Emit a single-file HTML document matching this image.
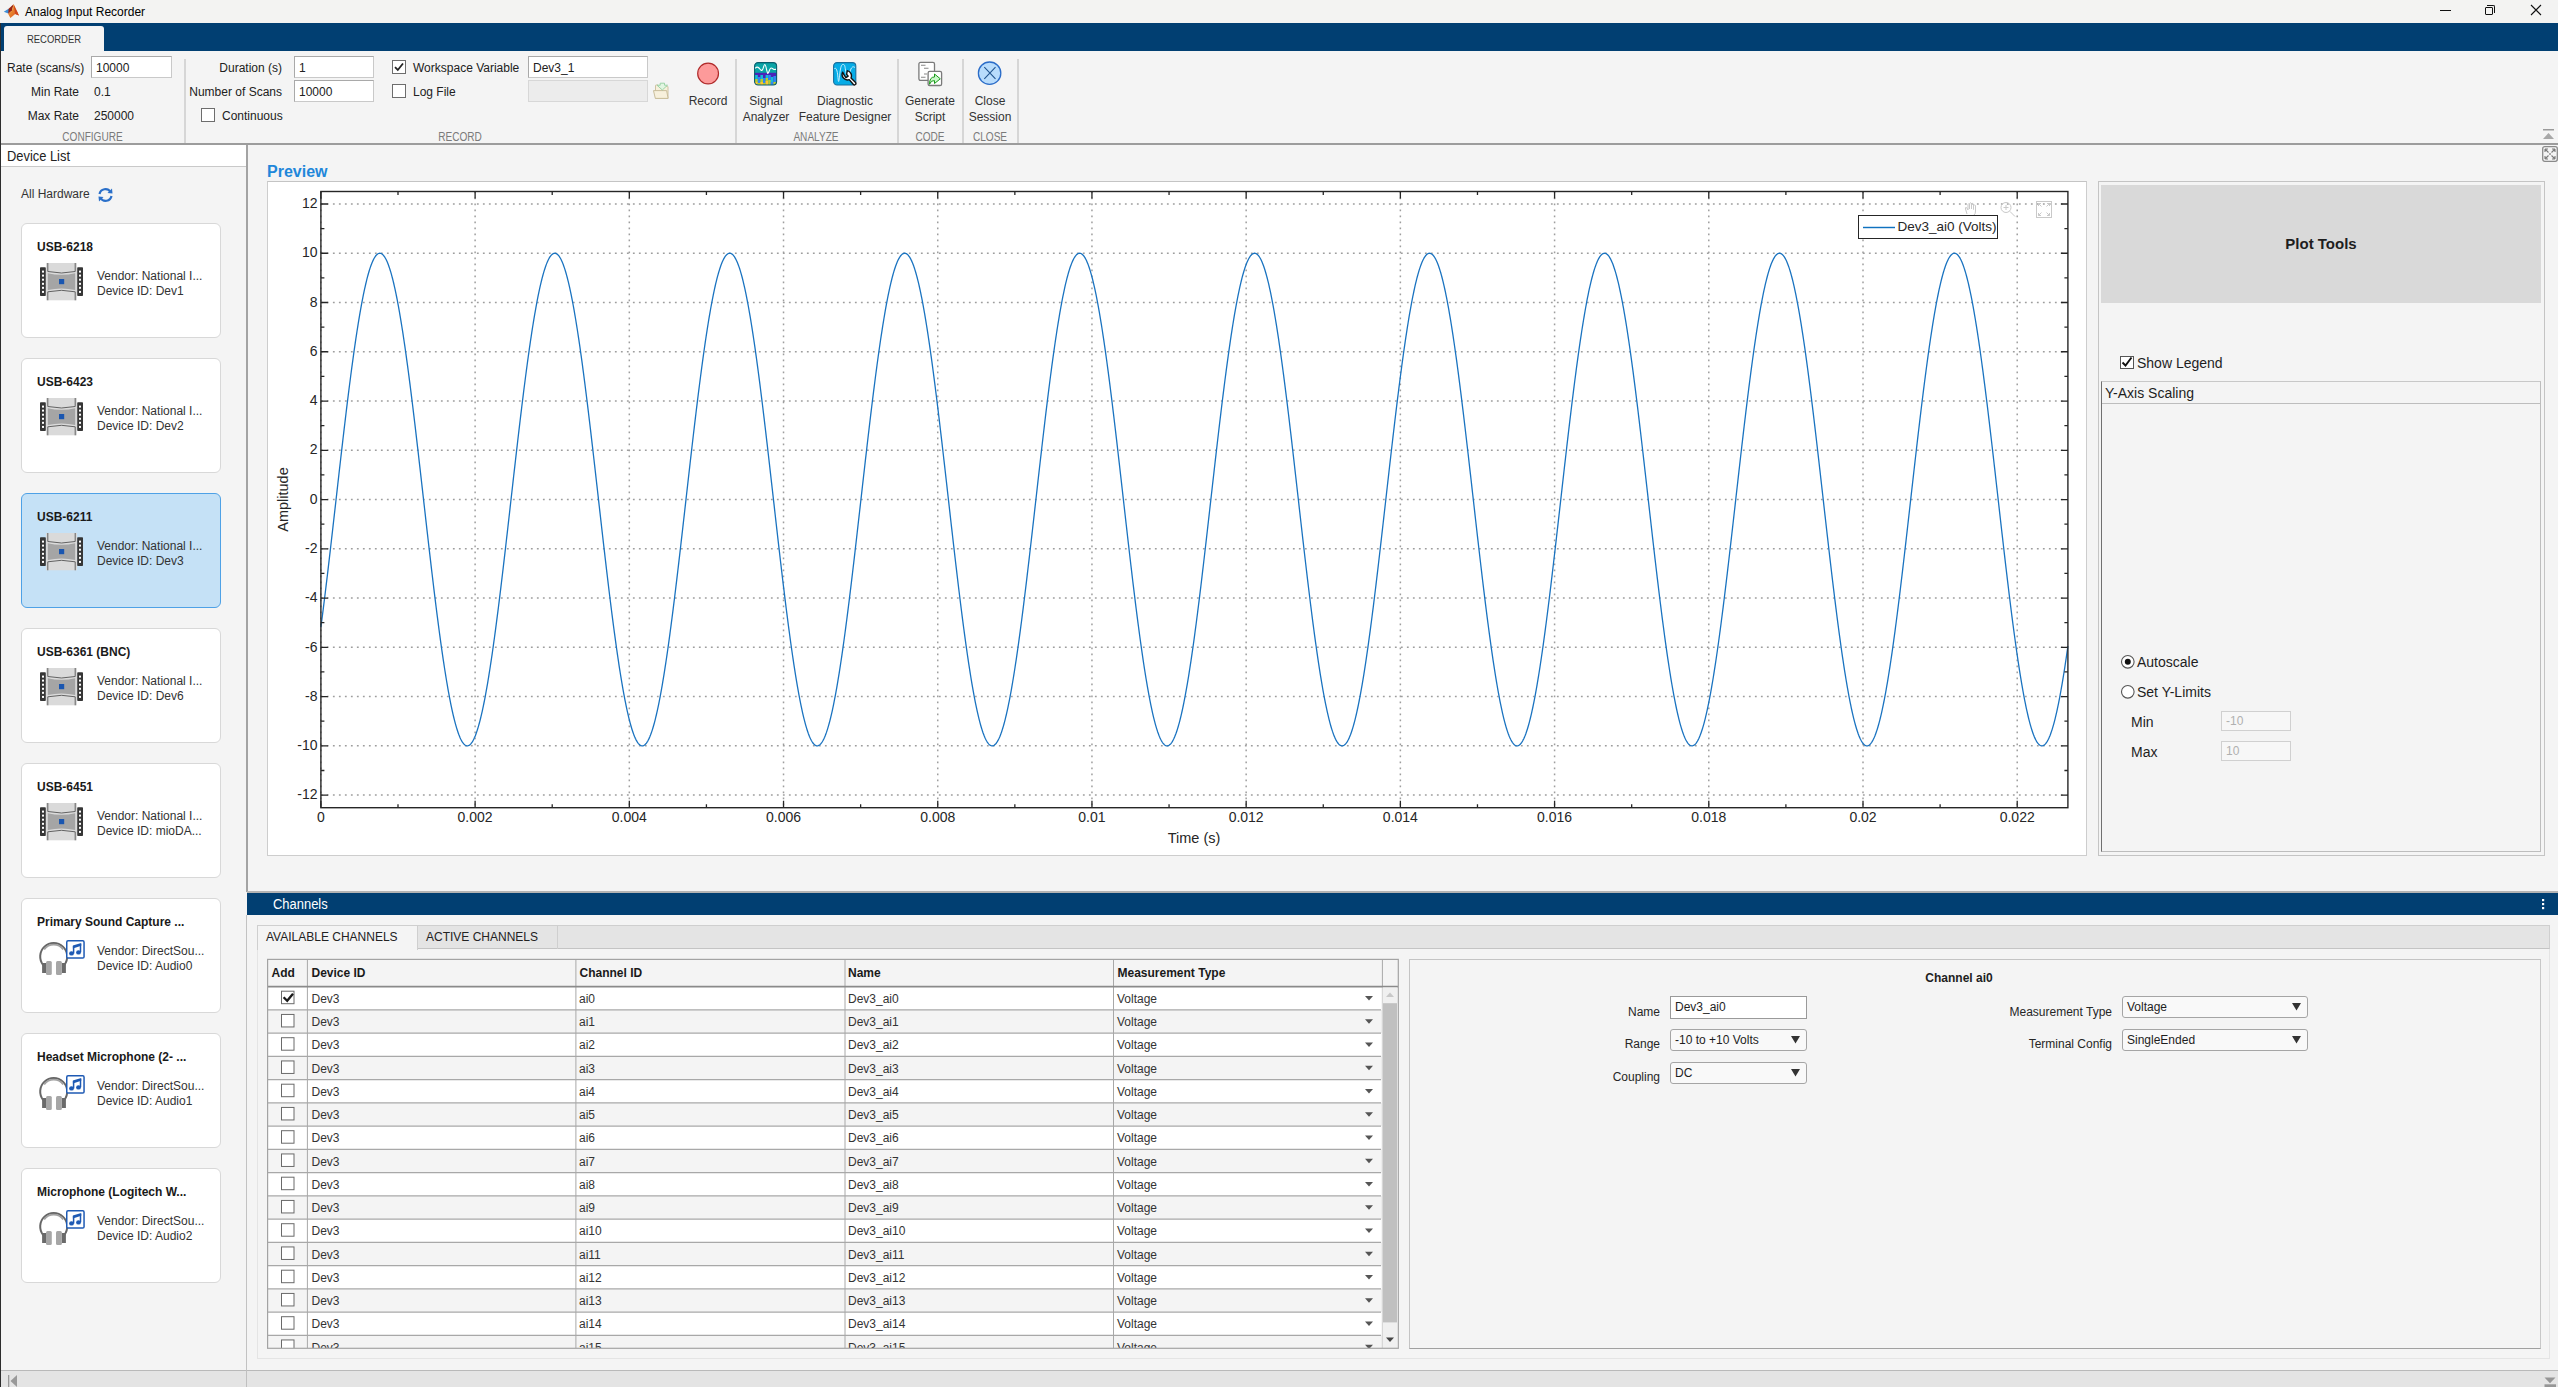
<!DOCTYPE html><html><head><meta charset="utf-8"><title>Analog Input Recorder</title><style>

*{box-sizing:border-box;margin:0;padding:0}
html,body{width:2558px;height:1387px;overflow:hidden;background:#f4f4f4;font-family:"Liberation Sans",sans-serif;color:#212121}
.a{position:absolute;white-space:nowrap}
.t12{font-size:12px;line-height:14px}
.inp{position:absolute;background:#fff;border:1px solid #a9a9a9;border-bottom-color:#c9c9c9;border-right-color:#c9c9c9}
.cb{position:absolute;width:14px;height:14px;background:#fff;border:1px solid #6d6d6d}
.sep{position:absolute;width:2px;background:#d6d6d6}
.glab{position:absolute;font-size:12px;line-height:14px;color:#7a7a7a;text-align:center;letter-spacing:0;transform:scaleX(0.84)}
.btxt{position:absolute;font-size:12px;line-height:16px;text-align:center;color:#333;margin-top:1px}

</style></head><body>
<div class="a" style="left:0;top:0;width:2558px;height:23px;background:#f3f3f2"></div>
<svg class="a" style="left:0;top:0" width="22" height="22" viewBox="0 0 22 22">
<defs><linearGradient id="mlo" x1="0" y1="0" x2="1" y2="1"><stop offset="0" stop-color="#f7b23a"/><stop offset="1" stop-color="#d5481c"/></linearGradient></defs>
<path d="M3.8 11.8 L8.6 8.7 L10.6 10.6 L8.2 13.6 Z" fill="#3f8fd6"/>
<path d="M8.6 8.7 L13.6 4.2 L12 10.5 L8.2 13.9 Z" fill="#9a2412"/>
<path d="M13.6 4.2 L17.6 12.6 L18.9 15.6 L15.2 14 L10.4 17.9 L8.2 13.9 L12 10.5 Z" fill="url(#mlo)"/>
<path d="M13.6 4.2 L17.6 12.6 L18.9 15.6 L15.2 14 Z" fill="#d0461c"/>
</svg>
<div class="a" style="left:25px;top:4px;font-size:12px;line-height:16px;color:#000">Analog Input Recorder</div>
<div class="a" style="left:2440px;top:10px;width:11px;height:1px;background:#111"></div>
<div class="a" style="left:2485px;top:7px;width:8px;height:8px;border:1px solid #111;border-radius:1px"></div>
<div class="a" style="left:2487px;top:5px;width:8px;height:8px;border-top:1px solid #111;border-right:1px solid #111;border-top-right-radius:2px"></div>
<svg class="a" style="left:2530px;top:4px" width="12" height="12" viewBox="0 0 12 12"><path d="M1 1L11 11M11 1L1 11" stroke="#111" stroke-width="1.1"/></svg>
<div class="a" style="left:0;top:23px;width:2558px;height:28px;background:#013f72"></div>
<div class="a" style="left:4px;top:26px;width:100px;height:26px;background:#f4f4f4;border-radius:3px 3px 0 0"></div>
<div class="a" style="left:4px;top:32px;width:100px;text-align:center;font-size:11px;line-height:14px;color:#333;transform:scaleX(0.86)">RECORDER</div>
<div class="a" style="left:0;top:51px;width:2558px;height:92px;background:#f4f4f4"></div>
<div class="a" style="left:0;top:143px;width:2558px;height:2px;background:#9c9c9c"></div>
<div class="a t12" style="left:7px;top:61px">Rate (scans/s)</div>
<div class="inp" style="left:91px;top:56px;width:81px;height:22px"></div>
<div class="a t12" style="left:96px;top:61px">10000</div>
<div class="a t12" style="left:0;top:85px;width:79px;text-align:right">Min Rate</div>
<div class="a t12" style="left:94px;top:85px">0.1</div>
<div class="a t12" style="left:0;top:109px;width:79px;text-align:right">Max Rate</div>
<div class="a t12" style="left:94px;top:109px">250000</div>
<div class="glab" style="left:40px;top:130px;width:105px">CONFIGURE</div>
<div class="sep" style="left:184px;top:59px;height:84px"></div>
<div class="a t12" style="left:180px;top:61px;width:102px;text-align:right">Duration (s)</div>
<div class="inp" style="left:294px;top:56px;width:80px;height:22px"></div>
<div class="a t12" style="left:299px;top:61px">1</div>
<div class="a t12" style="left:180px;top:85px;width:102px;text-align:right">Number of Scans</div>
<div class="inp" style="left:294px;top:80px;width:80px;height:22px"></div>
<div class="a t12" style="left:299px;top:85px">10000</div>
<div class="cb" style="left:201px;top:108px"></div>
<div class="a t12" style="left:222px;top:109px">Continuous</div>
<div class="cb" style="left:392px;top:60px"></div>
<svg class="a" style="left:392px;top:60px" width="14" height="14" viewBox="0 0 14 14"><path d="M3 7.2 L5.8 10 L11 3.5" fill="none" stroke="#222" stroke-width="1.8"/></svg>
<div class="a t12" style="left:413px;top:61px">Workspace Variable</div>
<div class="cb" style="left:392px;top:84px"></div>
<div class="a t12" style="left:413px;top:85px">Log File</div>
<div class="inp" style="left:528px;top:56px;width:120px;height:22px"></div>
<div class="a t12" style="left:533px;top:61px">Dev3_1</div>
<div class="a" style="left:528px;top:80px;width:120px;height:22px;background:#ececec;border:1px solid #d7d7d7"></div>
<svg class="a" style="left:652px;top:82px" width="18" height="18" viewBox="0 0 18 18">
<path d="M3.5 16.3 V3.6 Q3.5 3 4.1 3 H6 L7 4.3 H15.4 Q16 4.3 16 4.9 V16.3 Z" fill="#f7f0dc" stroke="#c8bc98" stroke-width="0.9"/>
<path d="M1.5 8.6 H14.6 L16.1 16.4 H3.3 Z" fill="#f7f0dc" stroke="#c4b894" stroke-width="0.9" stroke-linejoin="round"/>
<path d="M8.2 1.2 H12.5 V3.2 H15.5 L10.3 8 L5 3.2 H8.2 Z" fill="#e2f6e2" stroke="#94cfa0" stroke-width="0.9" stroke-linejoin="round"/>
</svg>
<svg class="a" style="left:696px;top:61px" width="24" height="25" viewBox="0 0 24 25"><circle cx="12.1" cy="12.45" r="10.4" fill="#fd9a9a" stroke="#b02a2a" stroke-width="1.2"/></svg>
<div class="btxt" style="left:678px;top:92px;width:60px">Record</div>
<div class="glab" style="left:400px;top:130px;width:120px">RECORD</div>
<div class="sep" style="left:735px;top:59px;height:84px"></div>
<svg class="a" style="left:754px;top:61.5px" width="24" height="24" viewBox="0 0 24 24">
<defs><clipPath id="sa"><rect x="0.6" y="0.6" width="22" height="22.4" rx="3.5"/></clipPath></defs>
<g clip-path="url(#sa)">
<rect x="0" y="0" width="24" height="24" fill="#0aa4a6"/>
<rect x="0" y="10.8" width="24" height="13" fill="#4a22b8"/>
<rect x="1" y="13" width="2.8" height="11" fill="#14bcd8"/><rect x="1" y="17" width="2.8" height="7" fill="#b5cc2e"/><rect x="1" y="20" width="2.8" height="4" fill="#ffc22e"/>
<rect x="3.8" y="15" width="2.6" height="9" fill="#2f86f2"/><rect x="3.8" y="21" width="2.6" height="3" fill="#b5cc2e"/>
<rect x="6.4" y="13" width="2.6" height="11" fill="#14bcd8"/><rect x="6.4" y="17" width="2.6" height="7" fill="#b5cc2e"/><rect x="6.4" y="20" width="2.6" height="4" fill="#ffc22e"/>
<rect x="9" y="16" width="2.6" height="8" fill="#2f86f2"/><rect x="9" y="21" width="2.6" height="3" fill="#b5cc2e"/>
<rect x="11.6" y="13" width="2.6" height="11" fill="#14bcd8"/><rect x="11.6" y="16" width="2.6" height="8" fill="#b5cc2e"/><rect x="11.6" y="19" width="2.6" height="5" fill="#ffc22e"/>
<rect x="14.2" y="13" width="2.6" height="11" fill="#2f86f2"/><rect x="14.2" y="18" width="2.6" height="6" fill="#b5cc2e"/>
<rect x="16.8" y="15" width="2.6" height="9" fill="#14bcd8"/><rect x="16.8" y="20" width="2.6" height="4" fill="#2f86f2"/>
<rect x="19.4" y="14" width="3" height="10" fill="#2f86f2"/><rect x="19.4" y="20" width="3" height="4" fill="#b5cc2e"/>
</g>
<rect x="0.6" y="0.6" width="22" height="22.4" rx="3.5" fill="none" stroke="#0b5e6e" stroke-width="1.1"/>
<path d="M1.2 6.3 C2.5 4.8 3.8 4.8 5 6 S7 9.2 8.3 8 S9.8 2.5 10.7 2.5 S12 5 12.8 8.5 S13.8 11.8 14.5 10.5 S15.8 6.2 17 6 S19 7.2 20 7.4 S21.5 7.3 22 7.3" fill="none" stroke="#fff" stroke-width="1.1"/>
</svg>
<div class="btxt" style="left:726px;top:92px;width:80px">Signal<br>Analyzer</div>
<svg class="a" style="left:833px;top:61.5px" width="24" height="24" viewBox="0 0 24 24">
<rect x="0.6" y="0.6" width="22.2" height="22.4" rx="3.5" fill="#06ace6" stroke="#1a6e9c" stroke-width="1.1"/>
<path d="M1.2 7 C2 6 3 5.5 4 9 S5 19.5 5.6 19.5 S6.5 12 7.5 7 S9.5 2.5 10.5 2.5 S12 4 12.5 8 S13.5 14 15 14 S17 8 18.5 6 S21 5 22 5.5" fill="none" stroke="#d8f4ff" stroke-width="0.9"/>
<path d="M9.6 10.2 A5.4 5.4 0 0 0 16.2 17.6 L20.2 22.3 Q21.6 23.6 22.6 22.4 Q23.4 21.2 22.3 20.2 L18 16 A5.4 5.4 0 0 0 14.3 8.6 L13.6 12.3 L15.2 14.1 L12.9 15.6 L11.2 13.2 Z" fill="#fff" stroke="#111" stroke-width="1.4" stroke-linejoin="round"/>
</svg>
<div class="btxt" style="left:790px;top:92px;width:110px">Diagnostic<br>Feature Designer</div>
<div class="sep" style="left:897px;top:59px;height:84px"></div>
<div class="glab" style="left:776px;top:130px;width:80px">ANALYZE</div>
<svg class="a" style="left:916px;top:60px" width="28" height="28" viewBox="0 0 28 28">
<rect x="2.9" y="2.4" width="15.6" height="18" rx="1.6" fill="#fff" stroke="#7a7a7a" stroke-width="1.3"/>
<path d="M5 5.2h4.5M8 8.3h4.5M8 14h3M5 17.2h4.5" stroke="#888" stroke-width="1.1"/>
<rect x="12.1" y="11.3" width="13.5" height="14.2" rx="1.6" fill="#fff" stroke="#7a7a7a" stroke-width="1.3"/>
<path d="M13.5 24.3 Q13.5 16.8 18.5 17 L18.5 14 L24.3 18.8 L18.5 23.5 L18.5 20.6 Q15 20 13.5 24.3 Z" fill="#c8f8c8" stroke="#1a9a1a" stroke-width="1" stroke-linejoin="round"/>
</svg>
<div class="btxt" style="left:895px;top:92px;width:70px">Generate<br>Script</div>
<div class="glab" style="left:900px;top:130px;width:60px">CODE</div>
<div class="sep" style="left:962px;top:59px;height:84px"></div>
<svg class="a" style="left:977px;top:61px" width="25" height="25" viewBox="0 0 25 25">
<circle cx="12.6" cy="12.2" r="11.2" fill="#b8dcfc" stroke="#2a6cc8" stroke-width="1.3"/>
<path d="M7.3 6.2 L18.5 17.8 M18.5 6.2 L7.3 17.8" stroke="#22558f" stroke-width="1.1"/>
</svg>
<div class="btxt" style="left:955px;top:92px;width:70px">Close<br>Session</div>
<div class="glab" style="left:960px;top:130px;width:60px">CLOSE</div>
<div class="sep" style="left:1017px;top:59px;height:84px"></div>
<svg class="a" style="left:2543px;top:129px" width="11" height="11" viewBox="0 0 11 11"><rect x="0" y="0" width="11" height="1.5" fill="#9a9a9a"/><path d="M0 10 L5.5 4 L11 10 Z" fill="#a8a8a8"/></svg>
<div class="a" style="left:0;top:145px;width:247px;height:1225px;background:#f4f4f4"></div>
<div class="a" style="left:0;top:145px;width:247px;height:22px;background:#fff;border-bottom:1px solid #c9c9c9"></div>
<div class="a" style="left:7px;top:148px;font-size:14px;line-height:16px;color:#222;transform:scaleX(0.92);transform-origin:0 0">Device List</div>
<div class="a" style="left:246px;top:145px;width:2px;height:747px;background:#a3a3a3"></div><div class="a" style="left:246px;top:915px;width:1px;height:455px;background:#c2c2c2"></div>
<div class="a t12" style="left:21px;top:187px;color:#333">All Hardware</div>
<svg class="a" style="left:97px;top:187px" width="17" height="16" viewBox="0 0 17 16">
<path d="M2.5 7 A6 6 0 0 1 13.5 5" fill="none" stroke="#2a6fc9" stroke-width="2.2"/>
<path d="M10.5 6 L15.5 6.5 L15 1.5 Z" fill="#2a6fc9"/>
<path d="M14.5 9 A6 6 0 0 1 3.5 11" fill="none" stroke="#2a6fc9" stroke-width="2.2"/>
<path d="M6.5 10 L1.5 9.5 L2 14.5 Z" fill="#2a6fc9"/>
</svg>
<div class="a" style="left:21px;top:223px;width:200px;height:115px;border-radius:6px;background:#fff;border:1px solid #d8d8d8"></div>
<div class="a" style="left:37px;top:240px;font-size:12px;line-height:14px;font-weight:bold;color:#1a1a1a">USB-6218</div>
<svg class="a" style="left:40px;top:263px" width="43" height="38" viewBox="0 0 43 38">
<rect x="0" y="4.3" width="5.8" height="28.8" rx="0.8" fill="#363636"/>
<rect x="37.2" y="4.3" width="5.8" height="28.8" rx="0.8" fill="#363636"/>
<g fill="#fff"><rect x="2" y="7.6" width="2" height="2"/><rect x="39" y="7.6" width="2" height="2"/><rect x="2" y="11.6" width="2" height="2"/><rect x="39" y="11.6" width="2" height="2"/><rect x="2" y="15.7" width="2" height="2"/><rect x="39" y="15.7" width="2" height="2"/><rect x="2" y="19.8" width="2" height="2"/><rect x="39" y="19.8" width="2" height="2"/><rect x="2" y="23.8" width="2" height="2"/><rect x="39" y="23.8" width="2" height="2"/><rect x="2" y="27.9" width="2" height="2"/><rect x="39" y="27.9" width="2" height="2"/></g>
<rect x="6" y="0" width="31" height="37.3" fill="#dadada"/>
<path d="M7.8 0 V8.5 Q21.5 11.5 35.2 8.5 V0" fill="none" stroke="#555" stroke-width="0.9"/>
<path d="M7.8 37.3 V28.8 Q21.5 25.8 35.2 28.8 V37.3" fill="none" stroke="#555" stroke-width="0.9"/>
<path d="M7.8 10.3 Q21.5 13.3 35.2 10.3 V26.9 Q21.5 23.9 7.8 26.9 Z" fill="#a5a5a5"/>
<rect x="19" y="16" width="5.2" height="5.2" fill="#1a56b0"/>
</svg>
<div class="a" style="left:97px;top:269px;font-size:12px;line-height:15px;color:#333">Vendor: National I...<br>Device ID: Dev1</div>
<div class="a" style="left:21px;top:358px;width:200px;height:115px;border-radius:6px;background:#fff;border:1px solid #d8d8d8"></div>
<div class="a" style="left:37px;top:375px;font-size:12px;line-height:14px;font-weight:bold;color:#1a1a1a">USB-6423</div>
<svg class="a" style="left:40px;top:398px" width="43" height="38" viewBox="0 0 43 38">
<rect x="0" y="4.3" width="5.8" height="28.8" rx="0.8" fill="#363636"/>
<rect x="37.2" y="4.3" width="5.8" height="28.8" rx="0.8" fill="#363636"/>
<g fill="#fff"><rect x="2" y="7.6" width="2" height="2"/><rect x="39" y="7.6" width="2" height="2"/><rect x="2" y="11.6" width="2" height="2"/><rect x="39" y="11.6" width="2" height="2"/><rect x="2" y="15.7" width="2" height="2"/><rect x="39" y="15.7" width="2" height="2"/><rect x="2" y="19.8" width="2" height="2"/><rect x="39" y="19.8" width="2" height="2"/><rect x="2" y="23.8" width="2" height="2"/><rect x="39" y="23.8" width="2" height="2"/><rect x="2" y="27.9" width="2" height="2"/><rect x="39" y="27.9" width="2" height="2"/></g>
<rect x="6" y="0" width="31" height="37.3" fill="#dadada"/>
<path d="M7.8 0 V8.5 Q21.5 11.5 35.2 8.5 V0" fill="none" stroke="#555" stroke-width="0.9"/>
<path d="M7.8 37.3 V28.8 Q21.5 25.8 35.2 28.8 V37.3" fill="none" stroke="#555" stroke-width="0.9"/>
<path d="M7.8 10.3 Q21.5 13.3 35.2 10.3 V26.9 Q21.5 23.9 7.8 26.9 Z" fill="#a5a5a5"/>
<rect x="19" y="16" width="5.2" height="5.2" fill="#1a56b0"/>
</svg>
<div class="a" style="left:97px;top:404px;font-size:12px;line-height:15px;color:#333">Vendor: National I...<br>Device ID: Dev2</div>
<div class="a" style="left:21px;top:493px;width:200px;height:115px;border-radius:6px;background:#c5e1f6;border:1px solid #4ea1e6"></div>
<div class="a" style="left:37px;top:510px;font-size:12px;line-height:14px;font-weight:bold;color:#1a1a1a">USB-6211</div>
<svg class="a" style="left:40px;top:533px" width="43" height="38" viewBox="0 0 43 38">
<rect x="0" y="4.3" width="5.8" height="28.8" rx="0.8" fill="#363636"/>
<rect x="37.2" y="4.3" width="5.8" height="28.8" rx="0.8" fill="#363636"/>
<g fill="#fff"><rect x="2" y="7.6" width="2" height="2"/><rect x="39" y="7.6" width="2" height="2"/><rect x="2" y="11.6" width="2" height="2"/><rect x="39" y="11.6" width="2" height="2"/><rect x="2" y="15.7" width="2" height="2"/><rect x="39" y="15.7" width="2" height="2"/><rect x="2" y="19.8" width="2" height="2"/><rect x="39" y="19.8" width="2" height="2"/><rect x="2" y="23.8" width="2" height="2"/><rect x="39" y="23.8" width="2" height="2"/><rect x="2" y="27.9" width="2" height="2"/><rect x="39" y="27.9" width="2" height="2"/></g>
<rect x="6" y="0" width="31" height="37.3" fill="#dadada"/>
<path d="M7.8 0 V8.5 Q21.5 11.5 35.2 8.5 V0" fill="none" stroke="#555" stroke-width="0.9"/>
<path d="M7.8 37.3 V28.8 Q21.5 25.8 35.2 28.8 V37.3" fill="none" stroke="#555" stroke-width="0.9"/>
<path d="M7.8 10.3 Q21.5 13.3 35.2 10.3 V26.9 Q21.5 23.9 7.8 26.9 Z" fill="#a5a5a5"/>
<rect x="19" y="16" width="5.2" height="5.2" fill="#1a56b0"/>
</svg>
<div class="a" style="left:97px;top:539px;font-size:12px;line-height:15px;color:#333">Vendor: National I...<br>Device ID: Dev3</div>
<div class="a" style="left:21px;top:628px;width:200px;height:115px;border-radius:6px;background:#fff;border:1px solid #d8d8d8"></div>
<div class="a" style="left:37px;top:645px;font-size:12px;line-height:14px;font-weight:bold;color:#1a1a1a">USB-6361 (BNC)</div>
<svg class="a" style="left:40px;top:668px" width="43" height="38" viewBox="0 0 43 38">
<rect x="0" y="4.3" width="5.8" height="28.8" rx="0.8" fill="#363636"/>
<rect x="37.2" y="4.3" width="5.8" height="28.8" rx="0.8" fill="#363636"/>
<g fill="#fff"><rect x="2" y="7.6" width="2" height="2"/><rect x="39" y="7.6" width="2" height="2"/><rect x="2" y="11.6" width="2" height="2"/><rect x="39" y="11.6" width="2" height="2"/><rect x="2" y="15.7" width="2" height="2"/><rect x="39" y="15.7" width="2" height="2"/><rect x="2" y="19.8" width="2" height="2"/><rect x="39" y="19.8" width="2" height="2"/><rect x="2" y="23.8" width="2" height="2"/><rect x="39" y="23.8" width="2" height="2"/><rect x="2" y="27.9" width="2" height="2"/><rect x="39" y="27.9" width="2" height="2"/></g>
<rect x="6" y="0" width="31" height="37.3" fill="#dadada"/>
<path d="M7.8 0 V8.5 Q21.5 11.5 35.2 8.5 V0" fill="none" stroke="#555" stroke-width="0.9"/>
<path d="M7.8 37.3 V28.8 Q21.5 25.8 35.2 28.8 V37.3" fill="none" stroke="#555" stroke-width="0.9"/>
<path d="M7.8 10.3 Q21.5 13.3 35.2 10.3 V26.9 Q21.5 23.9 7.8 26.9 Z" fill="#a5a5a5"/>
<rect x="19" y="16" width="5.2" height="5.2" fill="#1a56b0"/>
</svg>
<div class="a" style="left:97px;top:674px;font-size:12px;line-height:15px;color:#333">Vendor: National I...<br>Device ID: Dev6</div>
<div class="a" style="left:21px;top:763px;width:200px;height:115px;border-radius:6px;background:#fff;border:1px solid #d8d8d8"></div>
<div class="a" style="left:37px;top:780px;font-size:12px;line-height:14px;font-weight:bold;color:#1a1a1a">USB-6451</div>
<svg class="a" style="left:40px;top:803px" width="43" height="38" viewBox="0 0 43 38">
<rect x="0" y="4.3" width="5.8" height="28.8" rx="0.8" fill="#363636"/>
<rect x="37.2" y="4.3" width="5.8" height="28.8" rx="0.8" fill="#363636"/>
<g fill="#fff"><rect x="2" y="7.6" width="2" height="2"/><rect x="39" y="7.6" width="2" height="2"/><rect x="2" y="11.6" width="2" height="2"/><rect x="39" y="11.6" width="2" height="2"/><rect x="2" y="15.7" width="2" height="2"/><rect x="39" y="15.7" width="2" height="2"/><rect x="2" y="19.8" width="2" height="2"/><rect x="39" y="19.8" width="2" height="2"/><rect x="2" y="23.8" width="2" height="2"/><rect x="39" y="23.8" width="2" height="2"/><rect x="2" y="27.9" width="2" height="2"/><rect x="39" y="27.9" width="2" height="2"/></g>
<rect x="6" y="0" width="31" height="37.3" fill="#dadada"/>
<path d="M7.8 0 V8.5 Q21.5 11.5 35.2 8.5 V0" fill="none" stroke="#555" stroke-width="0.9"/>
<path d="M7.8 37.3 V28.8 Q21.5 25.8 35.2 28.8 V37.3" fill="none" stroke="#555" stroke-width="0.9"/>
<path d="M7.8 10.3 Q21.5 13.3 35.2 10.3 V26.9 Q21.5 23.9 7.8 26.9 Z" fill="#a5a5a5"/>
<rect x="19" y="16" width="5.2" height="5.2" fill="#1a56b0"/>
</svg>
<div class="a" style="left:97px;top:809px;font-size:12px;line-height:15px;color:#333">Vendor: National I...<br>Device ID: mioDA...</div>
<div class="a" style="left:21px;top:898px;width:200px;height:115px;border-radius:6px;background:#fff;border:1px solid #d8d8d8"></div>
<div class="a" style="left:37px;top:915px;font-size:12px;line-height:14px;font-weight:bold;color:#1a1a1a">Primary Sound Capture ...</div>
<svg class="a" style="left:36px;top:938px" width="50" height="40" viewBox="0 0 50 40">
<path d="M7.2 27 A13.5 13.5 0 1 1 28.2 27" fill="none" stroke="#666" stroke-width="2"/>
<path d="M8.2 11.5 A11.8 11.8 0 0 1 27.2 11.5" fill="none" stroke="#a2a2a2" stroke-width="1.8"/>
<rect x="6.1" y="25" width="3.9" height="10" fill="#6a6a6a"/>
<rect x="25.9" y="25" width="4" height="10" fill="#6a6a6a"/>
<rect x="10" y="23" width="5.8" height="14" rx="1.5" fill="#a6a6a6"/>
<rect x="20" y="23" width="5.9" height="14" rx="1.5" fill="#a6a6a6"/>
<rect x="30.75" y="2.85" width="17.3" height="17.2" rx="1.3" fill="#fff" stroke="#1e5ab4" stroke-width="1.5"/>
<path d="M37.6 8 V15.5 M44.5 6 V14.3" fill="none" stroke="#1e5ab4" stroke-width="1.5"/>
<path d="M36.85 7.6 L45.25 5.0 V7.8 L36.85 10.4 Z" fill="#1e5ab4"/>
<ellipse cx="35.5" cy="15.4" rx="2.4" ry="2.2" fill="#1e5ab4"/>
<ellipse cx="42.5" cy="14.4" rx="2.4" ry="2.2" fill="#1e5ab4"/>
</svg>
<div class="a" style="left:97px;top:944px;font-size:12px;line-height:15px;color:#333">Vendor: DirectSou...<br>Device ID: Audio0</div>
<div class="a" style="left:21px;top:1033px;width:200px;height:115px;border-radius:6px;background:#fff;border:1px solid #d8d8d8"></div>
<div class="a" style="left:37px;top:1050px;font-size:12px;line-height:14px;font-weight:bold;color:#1a1a1a">Headset Microphone (2- ...</div>
<svg class="a" style="left:36px;top:1073px" width="50" height="40" viewBox="0 0 50 40">
<path d="M7.2 27 A13.5 13.5 0 1 1 28.2 27" fill="none" stroke="#666" stroke-width="2"/>
<path d="M8.2 11.5 A11.8 11.8 0 0 1 27.2 11.5" fill="none" stroke="#a2a2a2" stroke-width="1.8"/>
<rect x="6.1" y="25" width="3.9" height="10" fill="#6a6a6a"/>
<rect x="25.9" y="25" width="4" height="10" fill="#6a6a6a"/>
<rect x="10" y="23" width="5.8" height="14" rx="1.5" fill="#a6a6a6"/>
<rect x="20" y="23" width="5.9" height="14" rx="1.5" fill="#a6a6a6"/>
<rect x="30.75" y="2.85" width="17.3" height="17.2" rx="1.3" fill="#fff" stroke="#1e5ab4" stroke-width="1.5"/>
<path d="M37.6 8 V15.5 M44.5 6 V14.3" fill="none" stroke="#1e5ab4" stroke-width="1.5"/>
<path d="M36.85 7.6 L45.25 5.0 V7.8 L36.85 10.4 Z" fill="#1e5ab4"/>
<ellipse cx="35.5" cy="15.4" rx="2.4" ry="2.2" fill="#1e5ab4"/>
<ellipse cx="42.5" cy="14.4" rx="2.4" ry="2.2" fill="#1e5ab4"/>
</svg>
<div class="a" style="left:97px;top:1079px;font-size:12px;line-height:15px;color:#333">Vendor: DirectSou...<br>Device ID: Audio1</div>
<div class="a" style="left:21px;top:1168px;width:200px;height:115px;border-radius:6px;background:#fff;border:1px solid #d8d8d8"></div>
<div class="a" style="left:37px;top:1185px;font-size:12px;line-height:14px;font-weight:bold;color:#1a1a1a">Microphone (Logitech W...</div>
<svg class="a" style="left:36px;top:1208px" width="50" height="40" viewBox="0 0 50 40">
<path d="M7.2 27 A13.5 13.5 0 1 1 28.2 27" fill="none" stroke="#666" stroke-width="2"/>
<path d="M8.2 11.5 A11.8 11.8 0 0 1 27.2 11.5" fill="none" stroke="#a2a2a2" stroke-width="1.8"/>
<rect x="6.1" y="25" width="3.9" height="10" fill="#6a6a6a"/>
<rect x="25.9" y="25" width="4" height="10" fill="#6a6a6a"/>
<rect x="10" y="23" width="5.8" height="14" rx="1.5" fill="#a6a6a6"/>
<rect x="20" y="23" width="5.9" height="14" rx="1.5" fill="#a6a6a6"/>
<rect x="30.75" y="2.85" width="17.3" height="17.2" rx="1.3" fill="#fff" stroke="#1e5ab4" stroke-width="1.5"/>
<path d="M37.6 8 V15.5 M44.5 6 V14.3" fill="none" stroke="#1e5ab4" stroke-width="1.5"/>
<path d="M36.85 7.6 L45.25 5.0 V7.8 L36.85 10.4 Z" fill="#1e5ab4"/>
<ellipse cx="35.5" cy="15.4" rx="2.4" ry="2.2" fill="#1e5ab4"/>
<ellipse cx="42.5" cy="14.4" rx="2.4" ry="2.2" fill="#1e5ab4"/>
</svg>
<div class="a" style="left:97px;top:1214px;font-size:12px;line-height:15px;color:#333">Vendor: DirectSou...<br>Device ID: Audio2</div>
<div class="a" style="left:0;top:1370px;width:2558px;height:17px;background:#e4e4e4;border-top:1px solid #b9b9b9"></div>
<div class="a" style="left:246px;top:1370px;width:1px;height:17px;background:#c0c0c0"></div>
<svg class="a" style="left:8px;top:1375px" width="10" height="12" viewBox="0 0 10 12"><rect x="0" y="0" width="1.3" height="12" fill="#999"/><path d="M9 0 L2.5 6 L9 12 Z" fill="#999"/></svg>
<svg class="a" style="left:2544px;top:1377px" width="13" height="10" viewBox="0 0 13 10"><path d="M0.5 0.5 L11.5 0.5 L6 6.3 Z" fill="#969696"/><rect x="0.5" y="7.3" width="11.5" height="2.7" fill="#969696"/></svg>
<div class="a" style="left:0;top:23px;width:1px;height:1364px;background:#2d2d2d"></div>
<div class="a" style="left:267px;top:163px;font-size:16px;line-height:18px;font-weight:bold;color:#1f87da">Preview</div>
<div class="a" style="left:267px;top:181px;width:1820px;height:675px;background:#fff;border:1px solid #cdcdcd;border-top-color:#c4c4c4"></div>
<svg class="a" style="left:0;top:0" width="2558" height="1387" viewBox="0 0 2558 1387">
<path d="M320.90 191.50V807.70 M475.11 191.50V807.70 M629.32 191.50V807.70 M783.53 191.50V807.70 M937.74 191.50V807.70 M1091.95 191.50V807.70 M1246.16 191.50V807.70 M1400.37 191.50V807.70 M1554.58 191.50V807.70 M1708.79 191.50V807.70 M1863.00 191.50V807.70 M2017.21 191.50V807.70 M320.90 795.11H2067.90 M320.90 745.85H2067.90 M320.90 696.59H2067.90 M320.90 647.33H2067.90 M320.90 598.07H2067.90 M320.90 548.81H2067.90 M320.90 499.55H2067.90 M320.90 450.29H2067.90 M320.90 401.03H2067.90 M320.90 351.77H2067.90 M320.90 302.51H2067.90 M320.90 253.25H2067.90 M320.90 203.99H2067.90" stroke="#9e9e9e" stroke-width="1.5" stroke-dasharray="1.8 4.2" fill="none"/>
<polyline points="320.90,627.12 321.48,622.68 322.06,618.19 322.65,613.66 323.23,609.07 323.81,604.43 324.39,599.75 324.98,595.02 325.56,590.25 326.14,585.44 326.72,580.60 327.31,575.71 327.89,570.80 328.47,565.85 329.05,560.88 329.63,555.88 330.22,550.85 330.80,545.80 331.38,540.73 331.96,535.65 332.55,530.54 333.13,525.43 333.71,520.30 334.29,515.16 334.88,510.02 335.46,504.87 336.04,499.72 336.62,494.57 337.21,489.42 337.79,484.28 338.37,479.14 338.95,474.01 339.53,468.90 340.12,463.79 340.70,458.70 341.28,453.63 341.86,448.58 342.45,443.56 343.03,438.55 343.61,433.58 344.19,428.63 344.78,423.71 345.36,418.83 345.94,413.98 346.52,409.17 347.10,404.40 347.69,399.67 348.27,394.98 348.85,390.34 349.43,385.75 350.02,381.21 350.60,376.71 351.18,372.28 351.76,367.90 352.35,363.57 352.93,359.31 353.51,355.10 354.09,350.96 354.68,346.89 355.26,342.88 355.84,338.94 356.42,335.07 357.00,331.27 357.59,327.55 358.17,323.90 358.75,320.33 359.33,316.83 359.92,313.42 360.50,310.09 361.08,306.84 361.66,303.67 362.25,300.59 362.83,297.60 363.41,294.70 363.99,291.88 364.57,289.16 365.16,286.53 365.74,283.99 366.32,281.54 366.90,279.19 367.49,276.94 368.07,274.79 368.65,272.73 369.23,270.77 369.82,268.91 370.40,267.16 370.98,265.50 371.56,263.95 372.15,262.50 372.73,261.15 373.31,259.91 373.89,258.77 374.47,257.74 375.06,256.81 375.64,255.99 376.22,255.28 376.80,254.67 377.39,254.17 377.97,253.78 378.55,253.50 379.13,253.32 379.72,253.25 380.30,253.29 380.88,253.44 381.46,253.69 382.04,254.05 382.63,254.52 383.21,255.09 383.79,255.78 384.37,256.57 384.96,257.46 385.54,258.46 386.12,259.57 386.70,260.78 387.29,262.10 387.87,263.52 388.45,265.04 389.03,266.67 389.62,268.39 390.20,270.22 390.78,272.15 391.36,274.18 391.94,276.31 392.53,278.53 393.11,280.85 393.69,283.27 394.27,285.78 394.86,288.39 395.44,291.08 396.02,293.87 396.60,296.75 397.19,299.72 397.77,302.77 398.35,305.91 398.93,309.14 399.51,312.45 400.10,315.84 400.68,319.31 401.26,322.86 401.84,326.48 402.43,330.19 403.01,333.96 403.59,337.81 404.17,341.73 404.76,345.72 405.34,349.78 405.92,353.90 406.50,358.08 407.09,362.33 407.67,366.64 408.25,371.00 408.83,375.42 409.41,379.90 410.00,384.43 410.58,389.01 411.16,393.63 411.74,398.31 412.33,403.02 412.91,407.78 413.49,412.58 414.07,417.42 414.66,422.29 415.24,427.20 415.82,432.14 416.40,437.11 416.98,442.10 417.57,447.12 418.15,452.17 418.73,457.23 419.31,462.32 419.90,467.42 420.48,472.53 421.06,477.65 421.64,482.79 422.23,487.93 422.81,493.08 423.39,498.23 423.97,503.38 424.56,508.53 425.14,513.67 425.72,518.81 426.30,523.94 426.88,529.06 427.47,534.17 428.05,539.26 428.63,544.34 429.21,549.39 429.80,554.42 430.38,559.43 430.96,564.42 431.54,569.37 432.13,574.29 432.71,579.19 433.29,584.04 433.87,588.86 434.45,593.64 435.04,598.38 435.62,603.08 436.20,607.73 436.78,612.33 437.37,616.89 437.95,621.39 438.53,625.84 439.11,630.23 439.70,634.57 440.28,638.85 440.86,643.06 441.44,647.22 442.03,651.31 442.61,655.33 443.19,659.29 443.77,663.17 444.35,666.99 444.94,670.73 445.52,674.39 446.10,677.98 446.68,681.49 447.27,684.93 447.85,688.28 448.43,691.54 449.01,694.73 449.60,697.83 450.18,700.84 450.76,703.76 451.34,706.60 451.92,709.34 452.51,711.99 453.09,714.55 453.67,717.02 454.25,719.39 454.84,721.66 455.42,723.84 456.00,725.92 456.58,727.90 457.17,729.78 457.75,731.56 458.33,733.24 458.91,734.81 459.50,736.29 460.08,737.66 460.66,738.92 461.24,740.08 461.82,741.14 462.41,742.09 462.99,742.93 463.57,743.67 464.15,744.30 464.74,744.82 465.32,745.24 465.90,745.55 466.48,745.75 467.07,745.84 467.65,745.83 468.23,745.71 468.81,745.48 469.39,745.14 469.98,744.70 470.56,744.14 471.14,743.48 471.72,742.72 472.31,741.85 472.89,740.87 473.47,739.79 474.05,738.60 474.64,737.31 475.22,735.91 475.80,734.41 476.38,732.81 476.97,731.10 477.55,729.29 478.13,727.39 478.71,725.38 479.29,723.28 479.88,721.07 480.46,718.77 481.04,716.38 481.62,713.89 482.21,711.30 482.79,708.63 483.37,705.86 483.95,703.00 484.54,700.05 485.12,697.02 485.70,693.90 486.28,690.69 486.87,687.40 487.45,684.03 488.03,680.57 488.61,677.04 489.19,673.43 489.78,669.75 490.36,665.99 490.94,662.15 491.52,658.25 492.11,654.28 492.69,650.24 493.27,646.13 493.85,641.96 494.44,637.72 495.02,633.43 495.60,629.08 496.18,624.67 496.76,620.20 497.35,615.69 497.93,611.12 498.51,606.50 499.09,601.84 499.68,597.13 500.26,592.38 500.84,587.59 501.42,582.76 502.01,577.90 502.59,573.00 503.17,568.07 503.75,563.10 504.33,558.11 504.92,553.10 505.50,548.06 506.08,543.00 506.66,537.92 507.25,532.82 507.83,527.71 508.41,522.59 508.99,517.46 509.58,512.32 510.16,507.17 510.74,502.02 511.32,496.87 511.91,491.72 512.49,486.57 513.07,481.43 513.65,476.30 514.23,471.18 514.82,466.07 515.40,460.97 515.98,455.90 516.56,450.84 517.15,445.80 517.73,440.78 518.31,435.79 518.89,430.83 519.48,425.90 520.06,421.00 520.64,416.14 521.22,411.31 521.80,406.52 522.39,401.77 522.97,397.07 523.55,392.41 524.13,387.79 524.72,383.23 525.30,378.71 525.88,374.25 526.46,369.84 527.05,365.49 527.63,361.20 528.21,356.97 528.79,352.80 529.38,348.70 529.96,344.66 530.54,340.69 531.12,336.79 531.70,332.96 532.29,329.20 532.87,325.52 533.45,321.91 534.03,318.38 534.62,314.93 535.20,311.56 535.78,308.28 536.36,305.08 536.95,301.96 537.53,298.93 538.11,295.98 538.69,293.13 539.27,290.36 539.86,287.69 540.44,285.11 541.02,282.62 541.60,280.23 542.19,277.93 542.77,275.74 543.35,273.63 543.93,271.63 544.52,269.73 545.10,267.93 545.68,266.23 546.26,264.63 546.85,263.13 547.43,261.74 548.01,260.45 548.59,259.27 549.17,258.19 549.76,257.21 550.34,256.35 550.92,255.59 551.50,254.93 552.09,254.38 552.67,253.94 553.25,253.61 553.83,253.39 554.42,253.27 555.00,253.26 555.58,253.36 556.16,253.56 556.75,253.88 557.33,254.30 557.91,254.82 558.49,255.46 559.07,256.20 559.66,257.05 560.24,258.00 560.82,259.06 561.40,260.23 561.99,261.50 562.57,262.87 563.15,264.35 563.73,265.93 564.32,267.61 564.90,269.39 565.48,271.28 566.06,273.26 566.64,275.34 567.23,277.53 567.81,279.80 568.39,282.18 568.97,284.65 569.56,287.21 570.14,289.87 570.72,292.62 571.30,295.45 571.89,298.38 572.47,301.40 573.05,304.50 573.63,307.69 574.21,310.96 574.80,314.31 575.38,317.75 575.96,321.26 576.54,324.85 577.13,328.52 577.71,332.27 578.29,336.08 578.87,339.97 579.46,343.93 580.04,347.96 580.62,352.05 581.20,356.21 581.79,360.43 582.37,364.71 582.95,369.05 583.53,373.44 584.11,377.89 584.70,382.40 585.28,386.96 585.86,391.56 586.44,396.21 587.03,400.91 587.61,405.65 588.19,410.43 588.77,415.26 589.36,420.11 589.94,425.01 590.52,429.93 591.10,434.89 591.68,439.87 592.27,444.88 592.85,449.91 593.43,454.97 594.01,460.04 594.60,465.14 595.18,470.24 595.76,475.37 596.34,480.50 596.93,485.64 597.51,490.78 598.09,495.93 598.67,501.08 599.26,506.23 599.84,511.38 600.42,516.52 601.00,521.65 601.58,526.78 602.17,531.89 602.75,536.99 603.33,542.07 603.91,547.14 604.50,552.18 605.08,557.20 605.66,562.19 606.24,567.16 606.83,572.10 607.41,577.01 607.99,581.88 608.57,586.71 609.15,591.51 609.74,596.27 610.32,600.99 610.90,605.66 611.48,610.28 612.07,614.86 612.65,619.38 613.23,623.86 613.81,628.28 614.40,632.64 614.98,636.94 615.56,641.19 616.14,645.37 616.73,649.49 617.31,653.54 617.89,657.53 618.47,661.45 619.05,665.29 619.64,669.07 620.22,672.77 620.80,676.39 621.38,679.94 621.97,683.40 622.55,686.79 623.13,690.10 623.71,693.32 624.30,696.45 624.88,699.51 625.46,702.47 626.04,705.34 626.62,708.13 627.21,710.82 627.79,713.42 628.37,715.93 628.95,718.34 629.54,720.66 630.12,722.88 630.70,725.00 631.28,727.03 631.87,728.95 632.45,730.78 633.03,732.50 633.61,734.12 634.20,735.64 634.78,737.06 635.36,738.37 635.94,739.58 636.52,740.68 637.11,741.68 637.69,742.57 638.27,743.35 638.85,744.03 639.44,744.60 640.02,745.07 640.60,745.42 641.18,745.67 641.77,745.81 642.35,745.85 642.93,745.77 643.51,745.59 644.10,745.30 644.68,744.91 645.26,744.40 645.84,743.79 646.42,743.07 647.01,742.25 647.59,741.32 648.17,740.28 648.75,739.14 649.34,737.90 649.92,736.55 650.50,735.09 651.08,733.53 651.67,731.87 652.25,730.11 652.83,728.25 653.41,726.29 653.99,724.23 654.58,722.07 655.16,719.81 655.74,717.46 656.32,715.01 656.91,712.47 657.49,709.83 658.07,707.11 658.65,704.29 659.24,701.38 659.82,698.38 660.40,695.30 660.98,692.13 661.57,688.88 662.15,685.54 662.73,682.13 663.31,678.63 663.89,675.05 664.48,671.40 665.06,667.67 665.64,663.87 666.22,660.00 666.81,656.06 667.39,652.05 667.97,647.97 668.55,643.83 669.14,639.62 669.72,635.35 670.30,631.03 670.88,626.64 671.46,622.20 672.05,617.71 672.63,613.17 673.21,608.57 673.79,603.93 674.38,599.24 674.96,594.51 675.54,589.74 676.12,584.92 676.71,580.07 677.29,575.19 677.87,570.27 678.45,565.32 679.03,560.34 679.62,555.34 680.20,550.31 680.78,545.26 681.36,540.19 681.95,535.10 682.53,530.00 683.11,524.88 683.69,519.75 684.28,514.61 684.86,509.47 685.44,504.32 686.02,499.17 686.61,494.02 687.19,488.87 687.77,483.73 688.35,478.59 688.93,473.46 689.52,468.35 690.10,463.25 690.68,458.16 691.26,453.09 691.85,448.04 692.43,443.02 693.01,438.02 693.59,433.04 694.18,428.10 694.76,423.19 695.34,418.31 695.92,413.46 696.50,408.66 697.09,403.89 697.67,399.16 698.25,394.48 698.83,389.85 699.42,385.26 700.00,380.72 700.58,376.24 701.16,371.81 701.75,367.43 702.33,363.11 702.91,358.85 703.49,354.66 704.08,350.52 704.66,346.46 705.24,342.45 705.82,338.52 706.40,334.66 706.99,330.87 707.57,327.15 708.15,323.51 708.73,319.95 709.32,316.46 709.90,313.06 710.48,309.74 711.06,306.49 711.65,303.34 712.23,300.27 712.81,297.29 713.39,294.39 713.97,291.59 714.56,288.87 715.14,286.25 715.72,283.72 716.30,281.29 716.89,278.95 717.47,276.71 718.05,274.56 718.63,272.51 719.22,270.57 719.80,268.72 720.38,266.97 720.96,265.33 721.55,263.79 722.13,262.35 722.71,261.01 723.29,259.78 723.87,258.66 724.46,257.64 725.04,256.72 725.62,255.91 726.20,255.21 726.79,254.62 727.37,254.13 727.95,253.75 728.53,253.47 729.12,253.31 729.70,253.25 730.28,253.30 730.86,253.46 731.44,253.72 732.03,254.10 732.61,254.58 733.19,255.16 733.77,255.86 734.36,256.66 734.94,257.56 735.52,258.58 736.10,259.69 736.69,260.92 737.27,262.24 737.85,263.68 738.43,265.21 739.02,266.85 739.60,268.58 740.18,270.42 740.76,272.36 741.34,274.40 741.93,276.54 742.51,278.77 743.09,281.11 743.67,283.53 744.26,286.06 744.84,288.67 745.42,291.38 746.00,294.18 746.59,297.06 747.17,300.04 747.75,303.10 748.33,306.25 748.91,309.49 749.50,312.80 750.08,316.20 750.66,319.68 751.24,323.24 751.83,326.88 752.41,330.59 752.99,334.37 753.57,338.23 754.16,342.15 754.74,346.15 755.32,350.21 755.90,354.34 756.49,358.53 757.07,362.79 757.65,367.10 758.23,371.47 758.81,375.90 759.40,380.38 759.98,384.91 760.56,389.50 761.14,394.13 761.73,398.81 762.31,403.53 762.89,408.29 763.47,413.10 764.06,417.94 764.64,422.82 765.22,427.73 765.80,432.67 766.38,437.64 766.97,442.64 767.55,447.66 768.13,452.71 768.71,457.78 769.30,462.86 769.88,467.96 770.46,473.08 771.04,478.20 771.63,483.34 772.21,488.48 772.79,493.63 773.37,498.78 773.96,503.93 774.54,509.08 775.12,514.22 775.70,519.36 776.28,524.49 776.87,529.61 777.45,534.72 778.03,539.81 778.61,544.88 779.20,549.93 779.78,554.96 780.36,559.97 780.94,564.95 781.53,569.90 782.11,574.82 782.69,579.71 783.27,584.56 783.86,589.37 784.44,594.15 785.02,598.89 785.60,603.58 786.18,608.22 786.77,612.82 787.35,617.37 787.93,621.87 788.51,626.31 789.10,630.70 789.68,635.03 790.26,639.30 790.84,643.51 791.43,647.66 792.01,651.74 792.59,655.76 793.17,659.71 793.75,663.58 794.34,667.39 794.92,671.12 795.50,674.78 796.08,678.36 796.67,681.86 797.25,685.29 797.83,688.63 798.41,691.89 799.00,695.06 799.58,698.15 800.16,701.16 800.74,704.07 801.33,706.90 801.91,709.63 802.49,712.27 803.07,714.82 803.65,717.28 804.24,719.64 804.82,721.90 805.40,724.07 805.98,726.14 806.57,728.11 807.15,729.98 807.73,731.75 808.31,733.41 808.90,734.98 809.48,736.44 810.06,737.80 810.64,739.05 811.22,740.20 811.81,741.25 812.39,742.18 812.97,743.02 813.55,743.74 814.14,744.36 814.72,744.87 815.30,745.28 815.88,745.57 816.47,745.76 817.05,745.85 817.63,745.82 818.21,745.69 818.79,745.45 819.38,745.10 819.96,744.64 820.54,744.08 821.12,743.41 821.71,742.63 822.29,741.75 822.87,740.76 823.45,739.66 824.04,738.47 824.62,737.16 825.20,735.75 825.78,734.24 826.37,732.63 826.95,730.91 827.53,729.10 828.11,727.18 828.69,725.16 829.28,723.05 829.86,720.83 830.44,718.52 831.02,716.12 831.61,713.62 832.19,711.02 832.77,708.34 833.35,705.56 833.94,702.69 834.52,699.73 835.10,696.69 835.68,693.56 836.26,690.34 836.85,687.04 837.43,683.66 838.01,680.20 838.59,676.66 839.18,673.04 839.76,669.35 840.34,665.58 840.92,661.74 841.51,657.83 842.09,653.85 842.67,649.80 843.25,645.68 843.84,641.51 844.42,637.27 845.00,632.97 845.58,628.61 846.16,624.19 846.75,619.72 847.33,615.20 847.91,610.63 848.49,606.01 849.08,601.34 849.66,596.63 850.24,591.87 850.82,587.08 851.41,582.24 851.99,577.37 852.57,572.47 853.15,567.54 853.74,562.57 854.32,557.58 854.90,552.56 855.48,547.52 856.06,542.46 856.65,537.37 857.23,532.28 857.81,527.17 858.39,522.04 858.98,516.91 859.56,511.77 860.14,506.62 860.72,501.47 861.31,496.32 861.89,491.17 862.47,486.02 863.05,480.88 863.63,475.75 864.22,470.63 864.80,465.52 865.38,460.43 865.96,455.35 866.55,450.30 867.13,445.26 867.71,440.25 868.29,435.26 868.88,430.30 869.46,425.38 870.04,420.48 870.62,415.62 871.20,410.80 871.79,406.01 872.37,401.27 872.95,396.57 873.53,391.91 874.12,387.30 874.70,382.74 875.28,378.23 875.86,373.78 876.45,369.38 877.03,365.03 877.61,360.75 878.19,356.52 878.78,352.36 879.36,348.26 879.94,344.23 880.52,340.27 881.10,336.38 881.69,332.55 882.27,328.80 882.85,325.13 883.43,321.53 884.02,318.01 884.60,314.57 885.18,311.21 885.76,307.93 886.35,304.74 886.93,301.63 887.51,298.61 888.09,295.67 888.67,292.83 889.26,290.07 889.84,287.41 890.42,284.84 891.00,282.36 891.59,279.98 892.17,277.69 892.75,275.51 893.33,273.42 893.92,271.42 894.50,269.53 895.08,267.74 895.66,266.05 896.25,264.46 896.83,262.98 897.41,261.60 897.99,260.32 898.57,259.15 899.16,258.08 899.74,257.12 900.32,256.26 900.90,255.51 901.49,254.87 902.07,254.33 902.65,253.90 903.23,253.58 903.82,253.37 904.40,253.26 904.98,253.26 905.56,253.37 906.14,253.59 906.73,253.92 907.31,254.35 907.89,254.89 908.47,255.53 909.06,256.29 909.64,257.15 910.22,258.11 910.80,259.18 911.39,260.36 911.97,261.64 912.55,263.02 913.13,264.51 913.72,266.10 914.30,267.80 914.88,269.59 915.46,271.49 916.04,273.48 916.63,275.57 917.21,277.77 917.79,280.05 918.37,282.44 918.96,284.92 919.54,287.49 920.12,290.16 920.70,292.91 921.29,295.76 921.87,298.70 922.45,301.73 923.03,304.84 923.62,308.03 924.20,311.31 924.78,314.68 925.36,318.12 925.94,321.64 926.53,325.24 927.11,328.92 927.69,332.67 928.27,336.50 928.86,340.39 929.44,344.36 930.02,348.39 930.60,352.49 931.19,356.65 931.77,360.88 932.35,365.17 932.93,369.51 933.51,373.92 934.10,378.37 934.68,382.88 935.26,387.45 935.84,392.06 936.43,396.71 937.01,401.42 937.59,406.16 938.17,410.95 938.76,415.77 939.34,420.63 939.92,425.53 940.50,430.46 941.08,435.42 941.67,440.41 942.25,445.42 942.83,450.45 943.41,455.51 944.00,460.59 944.58,465.68 945.16,470.79 945.74,475.91 946.33,481.05 946.91,486.19 947.49,491.33 948.07,496.48 948.66,501.63 949.24,506.78 949.82,511.93 950.40,517.07 950.98,522.20 951.57,527.33 952.15,532.44 952.73,537.54 953.31,542.62 953.90,547.68 954.48,552.72 955.06,557.74 955.64,562.73 956.23,567.69 956.81,572.63 957.39,577.53 957.97,582.40 958.55,587.23 959.14,592.02 959.72,596.78 960.30,601.49 960.88,606.15 961.47,610.77 962.05,615.34 962.63,619.87 963.21,624.33 963.80,628.75 964.38,633.10 964.96,637.40 965.54,641.64 966.13,645.82 966.71,649.93 967.29,653.97 967.87,657.95 968.45,661.86 969.04,665.70 969.62,669.47 970.20,673.16 970.78,676.77 971.37,680.31 971.95,683.77 972.53,687.15 973.11,690.44 973.70,693.66 974.28,696.78 974.86,699.83 975.44,702.78 976.02,705.65 976.61,708.42 977.19,711.10 977.77,713.70 978.35,716.19 978.94,718.60 979.52,720.90 980.10,723.11 980.68,725.23 981.27,727.24 981.85,729.15 982.43,730.97 983.01,732.68 983.60,734.29 984.18,735.80 984.76,737.20 985.34,738.50 985.92,739.70 986.51,740.79 987.09,741.78 987.67,742.66 988.25,743.43 988.84,744.10 989.42,744.66 990.00,745.11 990.58,745.46 991.17,745.69 991.75,745.82 992.33,745.85 992.91,745.76 993.50,745.57 994.08,745.27 994.66,744.86 995.24,744.34 995.82,743.72 996.41,742.99 996.99,742.16 997.57,741.21 998.15,740.17 998.74,739.01 999.32,737.76 999.90,736.39 1000.48,734.93 1001.07,733.36 1001.65,731.69 1002.23,729.92 1002.81,728.05 1003.39,726.07 1003.98,724.00 1004.56,721.83 1005.14,719.57 1005.72,717.20 1006.31,714.74 1006.89,712.19 1007.47,709.55 1008.05,706.81 1008.64,703.98 1009.22,701.06 1009.80,698.06 1010.38,694.97 1010.97,691.79 1011.55,688.53 1012.13,685.18 1012.71,681.76 1013.29,678.25 1013.88,674.67 1014.46,671.01 1015.04,667.27 1015.62,663.46 1016.21,659.58 1016.79,655.63 1017.37,651.61 1017.95,647.53 1018.54,643.38 1019.12,639.17 1019.70,634.89 1020.28,630.56 1020.86,626.17 1021.45,621.73 1022.03,617.23 1022.61,612.68 1023.19,608.08 1023.78,603.43 1024.36,598.74 1024.94,594.00 1025.52,589.22 1026.11,584.41 1026.69,579.55 1027.27,574.66 1027.85,569.74 1028.43,564.79 1029.02,559.81 1029.60,554.80 1030.18,549.77 1030.76,544.72 1031.35,539.65 1031.93,534.56 1032.51,529.45 1033.09,524.33 1033.68,519.20 1034.26,514.06 1034.84,508.92 1035.42,503.77 1036.01,498.62 1036.59,493.47 1037.17,488.32 1037.75,483.18 1038.33,478.04 1038.92,472.92 1039.50,467.80 1040.08,462.70 1040.66,457.62 1041.25,452.55 1041.83,447.51 1042.41,442.48 1042.99,437.48 1043.58,432.51 1044.16,427.57 1044.74,422.66 1045.32,417.79 1045.90,412.95 1046.49,408.14 1047.07,403.38 1047.65,398.66 1048.23,393.98 1048.82,389.35 1049.40,384.77 1049.98,380.24 1050.56,375.76 1051.15,371.33 1051.73,366.96 1052.31,362.65 1052.89,358.40 1053.48,354.21 1054.06,350.08 1054.64,346.02 1055.22,342.03 1055.80,338.11 1056.39,334.25 1056.97,330.47 1057.55,326.76 1058.13,323.13 1058.72,319.57 1059.30,316.10 1059.88,312.70 1060.46,309.38 1061.05,306.15 1061.63,303.01 1062.21,299.94 1062.79,296.97 1063.38,294.09 1063.96,291.29 1064.54,288.59 1065.12,285.97 1065.70,283.46 1066.29,281.03 1066.87,278.70 1067.45,276.47 1068.03,274.34 1068.62,272.30 1069.20,270.36 1069.78,268.53 1070.36,266.79 1070.95,265.16 1071.53,263.63 1072.11,262.20 1072.69,260.88 1073.27,259.66 1073.86,258.54 1074.44,257.53 1075.02,256.63 1075.60,255.83 1076.19,255.14 1076.77,254.56 1077.35,254.08 1077.93,253.71 1078.52,253.45 1079.10,253.30 1079.68,253.25 1080.26,253.31 1080.85,253.48 1081.43,253.76 1082.01,254.14 1082.59,254.63 1083.17,255.23 1083.76,255.94 1084.34,256.75 1084.92,257.67 1085.50,258.69 1086.09,259.82 1086.67,261.05 1087.25,262.39 1087.83,263.83 1088.42,265.38 1089.00,267.03 1089.58,268.78 1090.16,270.63 1090.74,272.58 1091.33,274.63 1091.91,276.77 1092.49,279.02 1093.07,281.36 1093.66,283.80 1094.24,286.33 1094.82,288.96 1095.40,291.67 1095.99,294.48 1096.57,297.38 1097.15,300.36 1097.73,303.44 1098.32,306.60 1098.90,309.84 1099.48,313.16 1100.06,316.57 1100.64,320.06 1101.23,323.63 1101.81,327.27 1102.39,330.99 1102.97,334.78 1103.56,338.64 1104.14,342.58 1104.72,346.58 1105.30,350.65 1105.89,354.79 1106.47,358.99 1107.05,363.25 1107.63,367.57 1108.21,371.94 1108.80,376.38 1109.38,380.86 1109.96,385.40 1110.54,389.99 1111.13,394.63 1111.71,399.31 1112.29,404.04 1112.87,408.81 1113.46,413.61 1114.04,418.46 1114.62,423.34 1115.20,428.26 1115.78,433.20 1116.37,438.18 1116.95,443.18 1117.53,448.20 1118.11,453.25 1118.70,458.32 1119.28,463.41 1119.86,468.51 1120.44,473.63 1121.03,478.75 1121.61,483.89 1122.19,489.03 1122.77,494.18 1123.36,499.33 1123.94,504.48 1124.52,509.63 1125.10,514.77 1125.68,519.91 1126.27,525.04 1126.85,530.16 1127.43,535.26 1128.01,540.35 1128.60,545.42 1129.18,550.47 1129.76,555.50 1130.34,560.50 1130.93,565.48 1131.51,570.43 1132.09,575.34 1132.67,580.23 1133.26,585.08 1133.84,589.89 1134.42,594.66 1135.00,599.39 1135.58,604.08 1136.17,608.72 1136.75,613.31 1137.33,617.85 1137.91,622.34 1138.50,626.78 1139.08,631.16 1139.66,635.49 1140.24,639.75 1140.83,643.96 1141.41,648.10 1141.99,652.18 1142.57,656.18 1143.15,660.12 1143.74,664.00 1144.32,667.79 1144.90,671.52 1145.48,675.17 1146.07,678.74 1146.65,682.23 1147.23,685.65 1147.81,688.98 1148.40,692.23 1148.98,695.40 1149.56,698.48 1150.14,701.47 1150.72,704.38 1151.31,707.19 1151.89,709.92 1152.47,712.55 1153.05,715.09 1153.64,717.54 1154.22,719.89 1154.80,722.14 1155.38,724.30 1155.97,726.35 1156.55,728.31 1157.13,730.17 1157.71,731.93 1158.30,733.58 1158.88,735.14 1159.46,736.59 1160.04,737.94 1160.62,739.18 1161.21,740.32 1161.79,741.35 1162.37,742.28 1162.95,743.10 1163.54,743.81 1164.12,744.42 1164.70,744.92 1165.28,745.31 1165.87,745.60 1166.45,745.78 1167.03,745.85 1167.61,745.81 1168.19,745.67 1168.78,745.41 1169.36,745.05 1169.94,744.59 1170.52,744.01 1171.11,743.33 1171.69,742.54 1172.27,741.65 1172.85,740.65 1173.44,739.54 1174.02,738.33 1174.60,737.02 1175.18,735.60 1175.77,734.07 1176.35,732.45 1176.93,730.72 1177.51,728.90 1178.09,726.97 1178.68,724.94 1179.26,722.81 1179.84,720.59 1180.42,718.27 1181.01,715.85 1181.59,713.34 1182.17,710.74 1182.75,708.04 1183.34,705.25 1183.92,702.38 1184.50,699.41 1185.08,696.36 1185.66,693.22 1186.25,689.99 1186.83,686.68 1187.41,683.30 1187.99,679.83 1188.58,676.28 1189.16,672.65 1189.74,668.95 1190.32,665.17 1190.91,661.32 1191.49,657.41 1192.07,653.42 1192.65,649.36 1193.24,645.24 1193.82,641.06 1194.40,636.81 1194.98,632.50 1195.56,628.14 1196.15,623.72 1196.73,619.24 1197.31,614.71 1197.89,610.14 1198.48,605.51 1199.06,600.84 1199.64,596.12 1200.22,591.36 1200.81,586.56 1201.39,581.72 1201.97,576.85 1202.55,571.94 1203.13,567.01 1203.72,562.04 1204.30,557.04 1204.88,552.02 1205.46,546.98 1206.05,541.91 1206.63,536.83 1207.21,531.73 1207.79,526.62 1208.38,521.49 1208.96,516.36 1209.54,511.22 1210.12,506.07 1210.71,500.92 1211.29,495.77 1211.87,490.62 1212.45,485.47 1213.03,480.33 1213.62,475.20 1214.20,470.08 1214.78,464.98 1215.36,459.88 1215.95,454.81 1216.53,449.76 1217.11,444.72 1217.69,439.71 1218.28,434.73 1218.86,429.78 1219.44,424.85 1220.02,419.96 1220.61,415.10 1221.19,410.28 1221.77,405.50 1222.35,400.76 1222.93,396.07 1223.52,391.41 1224.10,386.81 1224.68,382.26 1225.26,377.75 1225.85,373.30 1226.43,368.91 1227.01,364.57 1227.59,360.29 1228.18,356.07 1228.76,351.92 1229.34,347.83 1229.92,343.80 1230.50,339.85 1231.09,335.96 1231.67,332.15 1232.25,328.41 1232.83,324.74 1233.42,321.15 1234.00,317.64 1234.58,314.21 1235.16,310.85 1235.75,307.59 1236.33,304.40 1236.91,301.30 1237.49,298.29 1238.07,295.36 1238.66,292.53 1239.24,289.78 1239.82,287.13 1240.40,284.57 1240.99,282.10 1241.57,279.73 1242.15,277.46 1242.73,275.28 1243.32,273.20 1243.90,271.22 1244.48,269.34 1245.06,267.56 1245.65,265.88 1246.23,264.30 1246.81,262.83 1247.39,261.46 1247.97,260.19 1248.56,259.03 1249.14,257.97 1249.72,257.02 1250.30,256.18 1250.89,255.44 1251.47,254.81 1252.05,254.28 1252.63,253.86 1253.22,253.55 1253.80,253.35 1254.38,253.26 1254.96,253.27 1255.55,253.39 1256.13,253.62 1256.71,253.96 1257.29,254.40 1257.87,254.95 1258.46,255.61 1259.04,256.37 1259.62,257.24 1260.20,258.22 1260.79,259.30 1261.37,260.49 1261.95,261.78 1262.53,263.18 1263.12,264.68 1263.70,266.28 1264.28,267.98 1264.86,269.79 1265.44,271.69 1266.03,273.70 1266.61,275.80 1267.19,278.01 1267.77,280.30 1268.36,282.70 1268.94,285.19 1269.52,287.77 1270.10,290.45 1270.69,293.22 1271.27,296.07 1271.85,299.02 1272.43,302.05 1273.01,305.17 1273.60,308.38 1274.18,311.67 1274.76,315.04 1275.34,318.49 1275.93,322.02 1276.51,325.63 1277.09,329.32 1277.67,333.08 1278.26,336.91 1278.84,340.81 1279.42,344.79 1280.00,348.83 1280.59,352.93 1281.17,357.10 1281.75,361.34 1282.33,365.63 1282.91,369.98 1283.50,374.39 1284.08,378.85 1284.66,383.37 1285.24,387.94 1285.83,392.55 1286.41,397.22 1286.99,401.92 1287.57,406.67 1288.16,411.46 1288.74,416.29 1289.32,421.16 1289.90,426.06 1290.49,430.99 1291.07,435.95 1291.65,440.94 1292.23,445.96 1292.81,450.99 1293.40,456.05 1293.98,461.13 1294.56,466.23 1295.14,471.34 1295.73,476.46 1296.31,481.60 1296.89,486.74 1297.47,491.88 1298.06,497.03 1298.64,502.18 1299.22,507.33 1299.80,512.48 1300.38,517.62 1300.97,522.75 1301.55,527.87 1302.13,532.98 1302.71,538.08 1303.30,543.16 1303.88,548.22 1304.46,553.26 1305.04,558.27 1305.63,563.26 1306.21,568.22 1306.79,573.15 1307.37,578.05 1307.95,582.92 1308.54,587.74 1309.12,592.53 1309.70,597.28 1310.28,601.99 1310.87,606.65 1311.45,611.27 1312.03,615.83 1312.61,620.35 1313.20,624.81 1313.78,629.22 1314.36,633.57 1314.94,637.86 1315.53,642.09 1316.11,646.26 1316.69,650.36 1317.27,654.40 1317.85,658.37 1318.44,662.28 1319.02,666.11 1319.60,669.86 1320.18,673.55 1320.77,677.15 1321.35,680.68 1321.93,684.13 1322.51,687.50 1323.10,690.79 1323.68,694.00 1324.26,697.11 1324.84,700.15 1325.42,703.09 1326.01,705.95 1326.59,708.71 1327.17,711.39 1327.75,713.97 1328.34,716.46 1328.92,718.85 1329.50,721.14 1330.08,723.34 1330.67,725.45 1331.25,727.45 1331.83,729.35 1332.41,731.16 1333.00,732.86 1333.58,734.46 1334.16,735.95 1334.74,737.35 1335.32,738.64 1335.91,739.82 1336.49,740.90 1337.07,741.88 1337.65,742.75 1338.24,743.51 1338.82,744.16 1339.40,744.71 1339.98,745.15 1340.57,745.49 1341.15,745.71 1341.73,745.83 1342.31,745.84 1342.89,745.74 1343.48,745.54 1344.06,745.23 1344.64,744.81 1345.22,744.28 1345.81,743.65 1346.39,742.91 1346.97,742.06 1347.55,741.11 1348.14,740.05 1348.72,738.88 1349.30,737.62 1349.88,736.24 1350.47,734.77 1351.05,733.19 1351.63,731.51 1352.21,729.72 1352.79,727.84 1353.38,725.86 1353.96,723.77 1354.54,721.59 1355.12,719.32 1355.71,716.94 1356.29,714.48 1356.87,711.91 1357.45,709.26 1358.04,706.51 1358.62,703.67 1359.20,700.75 1359.78,697.73 1360.36,694.63 1360.95,691.44 1361.53,688.17 1362.11,684.82 1362.69,681.38 1363.28,677.87 1363.86,674.28 1364.44,670.61 1365.02,666.87 1365.61,663.05 1366.19,659.16 1366.77,655.21 1367.35,651.18 1367.94,647.09 1368.52,642.93 1369.10,638.71 1369.68,634.43 1370.26,630.09 1370.85,625.70 1371.43,621.25 1372.01,616.74 1372.59,612.19 1373.18,607.58 1373.76,602.93 1374.34,598.23 1374.92,593.49 1375.51,588.71 1376.09,583.89 1376.67,579.03 1377.25,574.14 1377.84,569.21 1378.42,564.26 1379.00,559.28 1379.58,554.27 1380.16,549.23 1380.75,544.18 1381.33,539.10 1381.91,534.01 1382.49,528.90 1383.08,523.78 1383.66,518.65 1384.24,513.51 1384.82,508.37 1385.41,503.22 1385.99,498.07 1386.57,492.92 1387.15,487.77 1387.73,482.63 1388.32,477.49 1388.90,472.37 1389.48,467.26 1390.06,462.16 1390.65,457.07 1391.23,452.01 1391.81,446.97 1392.39,441.95 1392.98,436.95 1393.56,431.98 1394.14,427.05 1394.72,422.14 1395.30,417.27 1395.89,412.43 1396.47,407.63 1397.05,402.87 1397.63,398.16 1398.22,393.49 1398.80,388.86 1399.38,384.28 1399.96,379.76 1400.55,375.28 1401.13,370.86 1401.71,366.50 1402.29,362.19 1402.88,357.95 1403.46,353.77 1404.04,349.65 1404.62,345.59 1405.20,341.61 1405.79,337.69 1406.37,333.84 1406.95,330.07 1407.53,326.37 1408.12,322.74 1408.70,319.20 1409.28,315.73 1409.86,312.34 1410.45,309.03 1411.03,305.81 1411.61,302.67 1412.19,299.62 1412.78,296.66 1413.36,293.78 1413.94,291.00 1414.52,288.30 1415.10,285.70 1415.69,283.19 1416.27,280.78 1416.85,278.46 1417.43,276.24 1418.02,274.11 1418.60,272.09 1419.18,270.16 1419.76,268.34 1420.35,266.61 1420.93,264.99 1421.51,263.47 1422.09,262.05 1422.67,260.74 1423.26,259.53 1423.84,258.43 1424.42,257.43 1425.00,256.54 1425.59,255.75 1426.17,255.07 1426.75,254.50 1427.33,254.04 1427.92,253.68 1428.50,253.43 1429.08,253.29 1429.66,253.25 1430.24,253.32 1430.83,253.51 1431.41,253.79 1431.99,254.19 1432.57,254.69 1433.16,255.30 1433.74,256.02 1434.32,256.84 1434.90,257.77 1435.49,258.81 1436.07,259.95 1436.65,261.19 1437.23,262.54 1437.82,263.99 1438.40,265.55 1438.98,267.21 1439.56,268.97 1440.14,270.83 1440.73,272.79 1441.31,274.85 1441.89,277.01 1442.47,279.27 1443.06,281.62 1443.64,284.07 1444.22,286.61 1444.80,289.24 1445.39,291.97 1445.97,294.79 1446.55,297.69 1447.13,300.69 1447.72,303.77 1448.30,306.94 1448.88,310.19 1449.46,313.53 1450.04,316.94 1450.63,320.44 1451.21,324.01 1451.79,327.66 1452.37,331.39 1452.96,335.19 1453.54,339.06 1454.12,343.00 1454.70,347.02 1455.29,351.09 1455.87,355.23 1456.45,359.44 1457.03,363.71 1457.61,368.03 1458.20,372.42 1458.78,376.85 1459.36,381.35 1459.94,385.89 1460.53,390.49 1461.11,395.13 1461.69,399.82 1462.27,404.55 1462.86,409.32 1463.44,414.13 1464.02,418.98 1464.60,423.87 1465.18,428.78 1465.77,433.73 1466.35,438.71 1466.93,443.71 1467.51,448.74 1468.10,453.79 1468.68,458.86 1469.26,463.95 1469.84,469.06 1470.43,474.17 1471.01,479.30 1471.59,484.44 1472.17,489.58 1472.76,494.73 1473.34,499.88 1473.92,505.03 1474.50,510.18 1475.08,515.32 1475.67,520.46 1476.25,525.59 1476.83,530.70 1477.41,535.81 1478.00,540.89 1478.58,545.96 1479.16,551.01 1479.74,556.04 1480.33,561.04 1480.91,566.01 1481.49,570.95 1482.07,575.87 1482.66,580.75 1483.24,585.59 1483.82,590.40 1484.40,595.17 1484.98,599.89 1485.57,604.58 1486.15,609.21 1486.73,613.80 1487.31,618.34 1487.90,622.82 1488.48,627.25 1489.06,631.63 1489.64,635.95 1490.23,640.21 1490.81,644.40 1491.39,648.54 1491.97,652.61 1492.55,656.61 1493.14,660.54 1493.72,664.41 1494.30,668.20 1494.88,671.91 1495.47,675.55 1496.05,679.12 1496.63,682.60 1497.21,686.01 1497.80,689.33 1498.38,692.58 1498.96,695.73 1499.54,698.80 1500.12,701.79 1500.71,704.68 1501.29,707.49 1501.87,710.20 1502.45,712.83 1503.04,715.36 1503.62,717.79 1504.20,720.13 1504.78,722.37 1505.37,724.52 1505.95,726.57 1506.53,728.52 1507.11,730.36 1507.70,732.11 1508.28,733.76 1508.86,735.30 1509.44,736.74 1510.02,738.07 1510.61,739.31 1511.19,740.43 1511.77,741.45 1512.35,742.37 1512.94,743.18 1513.52,743.88 1514.10,744.48 1514.68,744.97 1515.27,745.35 1515.85,745.62 1516.43,745.79 1517.01,745.85 1517.59,745.80 1518.18,745.64 1518.76,745.38 1519.34,745.01 1519.92,744.53 1520.51,743.94 1521.09,743.25 1521.67,742.45 1522.25,741.55 1522.84,740.53 1523.42,739.42 1524.00,738.19 1524.58,736.87 1525.17,735.44 1525.75,733.91 1526.33,732.27 1526.91,730.53 1527.49,728.69 1528.08,726.75 1528.66,724.72 1529.24,722.58 1529.82,720.35 1530.41,718.02 1530.99,715.59 1531.57,713.07 1532.15,710.45 1532.74,707.75 1533.32,704.95 1533.90,702.06 1534.48,699.09 1535.07,696.02 1535.65,692.88 1536.23,689.64 1536.81,686.33 1537.39,682.93 1537.98,679.45 1538.56,675.89 1539.14,672.26 1539.72,668.55 1540.31,664.76 1540.89,660.91 1541.47,656.98 1542.05,652.99 1542.64,648.92 1543.22,644.80 1543.80,640.60 1544.38,636.35 1544.96,632.04 1545.55,627.67 1546.13,623.24 1546.71,618.76 1547.29,614.23 1547.88,609.64 1548.46,605.01 1549.04,600.33 1549.62,595.61 1550.21,590.85 1550.79,586.05 1551.37,581.20 1551.95,576.33 1552.53,571.42 1553.12,566.48 1553.70,561.50 1554.28,556.51 1554.86,551.48 1555.45,546.44 1556.03,541.37 1556.61,536.28 1557.19,531.18 1557.78,526.07 1558.36,520.94 1558.94,515.81 1559.52,510.66 1560.11,505.52 1560.69,500.37 1561.27,495.22 1561.85,490.07 1562.43,484.92 1563.02,479.78 1563.60,474.66 1564.18,469.54 1564.76,464.43 1565.35,459.34 1565.93,454.27 1566.51,449.22 1567.09,444.18 1567.68,439.18 1568.26,434.20 1568.84,429.25 1569.42,424.33 1570.01,419.44 1570.59,414.58 1571.17,409.77 1571.75,404.99 1572.33,400.26 1572.92,395.57 1573.50,390.92 1574.08,386.32 1574.66,381.77 1575.25,377.27 1575.83,372.83 1576.41,368.44 1576.99,364.11 1577.58,359.84 1578.16,355.63 1578.74,351.48 1579.32,347.40 1579.90,343.38 1580.49,339.43 1581.07,335.55 1581.65,331.74 1582.23,328.01 1582.82,324.35 1583.40,320.77 1583.98,317.27 1584.56,313.84 1585.15,310.50 1585.73,307.24 1586.31,304.06 1586.89,300.97 1587.47,297.97 1588.06,295.06 1588.64,292.23 1589.22,289.49 1589.80,286.85 1590.39,284.30 1590.97,281.84 1591.55,279.48 1592.13,277.22 1592.72,275.05 1593.30,272.98 1593.88,271.01 1594.46,269.14 1595.05,267.37 1595.63,265.70 1596.21,264.14 1596.79,262.67 1597.37,261.31 1597.96,260.06 1598.54,258.91 1599.12,257.86 1599.70,256.92 1600.29,256.09 1600.87,255.36 1601.45,254.74 1602.03,254.23 1602.62,253.83 1603.20,253.53 1603.78,253.34 1604.36,253.25 1604.95,253.28 1605.53,253.41 1606.11,253.65 1606.69,254.00 1607.27,254.45 1607.86,255.02 1608.44,255.69 1609.02,256.46 1609.60,257.34 1610.19,258.33 1610.77,259.42 1611.35,260.62 1611.93,261.93 1612.52,263.33 1613.10,264.84 1613.68,266.46 1614.26,268.17 1614.84,269.99 1615.43,271.90 1616.01,273.92 1616.59,276.03 1617.17,278.25 1617.76,280.56 1618.34,282.96 1618.92,285.46 1619.50,288.05 1620.09,290.74 1620.67,293.52 1621.25,296.38 1621.83,299.34 1622.41,302.38 1623.00,305.51 1623.58,308.73 1624.16,312.03 1624.74,315.41 1625.33,318.87 1625.91,322.41 1626.49,326.02 1627.07,329.72 1627.66,333.48 1628.24,337.32 1628.82,341.24 1629.40,345.22 1629.99,349.26 1630.57,353.38 1631.15,357.55 1631.73,361.79 1632.31,366.09 1632.90,370.45 1633.48,374.87 1634.06,379.34 1634.64,383.86 1635.23,388.43 1635.81,393.05 1636.39,397.72 1636.97,402.43 1637.56,407.18 1638.14,411.98 1638.72,416.81 1639.30,421.68 1639.88,426.58 1640.47,431.52 1641.05,436.48 1641.63,441.48 1642.21,446.49 1642.80,451.54 1643.38,456.60 1643.96,461.68 1644.54,466.78 1645.13,471.89 1645.71,477.01 1646.29,482.15 1646.87,487.29 1647.46,492.43 1648.04,497.58 1648.62,502.73 1649.20,507.88 1649.78,513.03 1650.37,518.17 1650.95,523.30 1651.53,528.42 1652.11,533.53 1652.70,538.62 1653.28,543.70 1653.86,548.76 1654.44,553.79 1655.03,558.81 1655.61,563.79 1656.19,568.75 1656.77,573.68 1657.36,578.57 1657.94,583.43 1658.52,588.26 1659.10,593.04 1659.68,597.79 1660.27,602.49 1660.85,607.15 1661.43,611.76 1662.01,616.32 1662.60,620.83 1663.18,625.28 1663.76,629.68 1664.34,634.03 1664.93,638.31 1665.51,642.54 1666.09,646.70 1666.67,650.80 1667.25,654.83 1667.84,658.79 1668.42,662.69 1669.00,666.51 1669.58,670.26 1670.17,673.94 1670.75,677.54 1671.33,681.06 1671.91,684.50 1672.50,687.86 1673.08,691.14 1673.66,694.33 1674.24,697.44 1674.82,700.47 1675.41,703.40 1675.99,706.25 1676.57,709.00 1677.15,711.67 1677.74,714.24 1678.32,716.72 1678.90,719.10 1679.48,721.38 1680.07,723.57 1680.65,725.67 1681.23,727.66 1681.81,729.55 1682.40,731.34 1682.98,733.03 1683.56,734.62 1684.14,736.11 1684.72,737.49 1685.31,738.77 1685.89,739.94 1686.47,741.01 1687.05,741.97 1687.64,742.83 1688.22,743.58 1688.80,744.23 1689.38,744.76 1689.97,745.19 1690.55,745.52 1691.13,745.73 1691.71,745.84 1692.30,745.84 1692.88,745.73 1693.46,745.51 1694.04,745.19 1694.62,744.76 1695.21,744.22 1695.79,743.57 1696.37,742.82 1696.95,741.96 1697.54,741.00 1698.12,739.93 1698.70,738.75 1699.28,737.47 1699.87,736.09 1700.45,734.60 1701.03,733.01 1701.61,731.32 1702.19,729.53 1702.78,727.63 1703.36,725.64 1703.94,723.55 1704.52,721.36 1705.11,719.07 1705.69,716.68 1706.27,714.21 1706.85,711.63 1707.44,708.97 1708.02,706.21 1708.60,703.36 1709.18,700.43 1709.76,697.40 1710.35,694.29 1710.93,691.10 1711.51,687.82 1712.09,684.45 1712.68,681.01 1713.26,677.49 1713.84,673.89 1714.42,670.21 1715.01,666.46 1715.59,662.64 1716.17,658.74 1716.75,654.78 1717.34,650.75 1717.92,646.65 1718.50,642.48 1719.08,638.26 1719.66,633.97 1720.25,629.63 1720.83,625.22 1721.41,620.77 1721.99,616.26 1722.58,611.70 1723.16,607.09 1723.74,602.43 1724.32,597.73 1724.91,592.98 1725.49,588.20 1726.07,583.37 1726.65,578.51 1727.24,573.61 1727.82,568.69 1728.40,563.73 1728.98,558.74 1729.56,553.73 1730.15,548.69 1730.73,543.63 1731.31,538.56 1731.89,533.46 1732.48,528.35 1733.06,523.23 1733.64,518.10 1734.22,512.96 1734.81,507.82 1735.39,502.67 1735.97,497.52 1736.55,492.37 1737.13,487.22 1737.72,482.08 1738.30,476.94 1738.88,471.82 1739.46,466.71 1740.05,461.61 1740.63,456.53 1741.21,451.47 1741.79,446.43 1742.38,441.41 1742.96,436.42 1743.54,431.45 1744.12,426.52 1744.70,421.62 1745.29,416.75 1745.87,411.91 1746.45,407.12 1747.03,402.37 1747.62,397.66 1748.20,392.99 1748.78,388.37 1749.36,383.80 1749.95,379.28 1750.53,374.81 1751.11,370.39 1751.69,366.04 1752.28,361.74 1752.86,357.50 1753.44,353.32 1754.02,349.21 1754.60,345.16 1755.19,341.18 1755.77,337.27 1756.35,333.43 1756.93,329.67 1757.52,325.98 1758.10,322.36 1758.68,318.82 1759.26,315.36 1759.85,311.98 1760.43,308.69 1761.01,305.47 1761.59,302.34 1762.18,299.30 1762.76,296.35 1763.34,293.48 1763.92,290.70 1764.50,288.02 1765.09,285.43 1765.67,282.93 1766.25,280.53 1766.83,278.22 1767.42,276.01 1768.00,273.89 1768.58,271.88 1769.16,269.96 1769.75,268.15 1770.33,266.43 1770.91,264.82 1771.49,263.31 1772.07,261.91 1772.66,260.61 1773.24,259.41 1773.82,258.32 1774.40,257.33 1774.99,256.45 1775.57,255.68 1776.15,255.01 1776.73,254.45 1777.32,253.99 1777.90,253.65 1778.48,253.41 1779.06,253.28 1779.64,253.25 1780.23,253.34 1780.81,253.53 1781.39,253.83 1781.97,254.24 1782.56,254.75 1783.14,255.37 1783.72,256.10 1784.30,256.94 1784.89,257.88 1785.47,258.92 1786.05,260.08 1786.63,261.33 1787.22,262.69 1787.80,264.16 1788.38,265.72 1788.96,267.39 1789.54,269.16 1790.13,271.04 1790.71,273.01 1791.29,275.08 1791.87,277.25 1792.46,279.51 1793.04,281.88 1793.62,284.33 1794.20,286.88 1794.79,289.53 1795.37,292.27 1795.95,295.09 1796.53,298.01 1797.11,301.01 1797.70,304.11 1798.28,307.28 1798.86,310.54 1799.44,313.89 1800.03,317.31 1800.61,320.82 1801.19,324.40 1801.77,328.06 1802.36,331.79 1802.94,335.60 1803.52,339.48 1804.10,343.43 1804.69,347.45 1805.27,351.53 1805.85,355.68 1806.43,359.89 1807.01,364.17 1807.60,368.50 1808.18,372.89 1808.76,377.33 1809.34,381.83 1809.93,386.38 1810.51,390.98 1811.09,395.63 1811.67,400.32 1812.26,405.06 1812.84,409.83 1813.42,414.65 1814.00,419.50 1814.59,424.39 1815.17,429.31 1815.75,434.26 1816.33,439.24 1816.91,444.25 1817.50,449.28 1818.08,454.33 1818.66,459.41 1819.24,464.50 1819.83,469.60 1820.41,474.72 1820.99,479.85 1821.57,484.99 1822.16,490.14 1822.74,495.28 1823.32,500.43 1823.90,505.58 1824.48,510.73 1825.07,515.88 1825.65,521.01 1826.23,526.14 1826.81,531.25 1827.40,536.35 1827.98,541.44 1828.56,546.50 1829.14,551.55 1829.73,556.57 1830.31,561.57 1830.89,566.54 1831.47,571.48 1832.05,576.39 1832.64,581.27 1833.22,586.11 1833.80,590.91 1834.38,595.68 1834.97,600.40 1835.55,605.07 1836.13,609.70 1836.71,614.29 1837.30,618.82 1837.88,623.30 1838.46,627.73 1839.04,632.10 1839.63,636.41 1840.21,640.66 1840.79,644.85 1841.37,648.98 1841.95,653.04 1842.54,657.03 1843.12,660.96 1843.70,664.81 1844.28,668.60 1844.87,672.31 1845.45,675.94 1846.03,679.50 1846.61,682.97 1847.20,686.37 1847.78,689.69 1848.36,692.92 1848.94,696.07 1849.53,699.13 1850.11,702.10 1850.69,704.99 1851.27,707.78 1851.85,710.49 1852.44,713.10 1853.02,715.62 1853.60,718.05 1854.18,720.38 1854.77,722.61 1855.35,724.74 1855.93,726.78 1856.51,728.72 1857.10,730.56 1857.68,732.29 1858.26,733.93 1858.84,735.46 1859.42,736.89 1860.01,738.21 1860.59,739.43 1861.17,740.55 1861.75,741.56 1862.34,742.46 1862.92,743.26 1863.50,743.95 1864.08,744.54 1864.67,745.01 1865.25,745.38 1865.83,745.65 1866.41,745.80 1866.99,745.85 1867.58,745.79 1868.16,745.62 1868.74,745.35 1869.32,744.96 1869.91,744.47 1870.49,743.87 1871.07,743.17 1871.65,742.36 1872.24,741.44 1872.82,740.42 1873.40,739.29 1873.98,738.06 1874.57,736.72 1875.15,735.28 1875.73,733.74 1876.31,732.09 1876.89,730.34 1877.48,728.49 1878.06,726.54 1878.64,724.49 1879.22,722.35 1879.81,720.10 1880.39,717.76 1880.97,715.32 1881.55,712.79 1882.14,710.17 1882.72,707.45 1883.30,704.65 1883.88,701.75 1884.47,698.76 1885.05,695.69 1885.63,692.53 1886.21,689.29 1886.79,685.97 1887.38,682.56 1887.96,679.07 1888.54,675.51 1889.12,671.86 1889.71,668.15 1890.29,664.35 1890.87,660.49 1891.45,656.56 1892.04,652.55 1892.62,648.48 1893.20,644.35 1893.78,640.15 1894.36,635.89 1894.95,631.57 1895.53,627.20 1896.11,622.76 1896.69,618.28 1897.28,613.74 1897.86,609.15 1898.44,604.51 1899.02,599.83 1899.61,595.11 1900.19,590.34 1900.77,585.53 1901.35,580.68 1901.93,575.80 1902.52,570.89 1903.10,565.94 1903.68,560.97 1904.26,555.97 1904.85,550.94 1905.43,545.89 1906.01,540.83 1906.59,535.74 1907.18,530.64 1907.76,525.52 1908.34,520.39 1908.92,515.26 1909.51,510.11 1910.09,504.97 1910.67,499.82 1911.25,494.66 1911.83,489.52 1912.42,484.37 1913.00,479.24 1913.58,474.11 1914.16,468.99 1914.75,463.89 1915.33,458.80 1915.91,453.73 1916.49,448.68 1917.08,443.65 1917.66,438.64 1918.24,433.67 1918.82,428.72 1919.41,423.80 1919.99,418.92 1920.57,414.07 1921.15,409.26 1921.73,404.48 1922.32,399.75 1922.90,395.07 1923.48,390.43 1924.06,385.83 1924.65,381.29 1925.23,376.80 1925.81,372.36 1926.39,367.97 1926.98,363.65 1927.56,359.38 1928.14,355.18 1928.72,351.04 1929.30,346.96 1929.89,342.95 1930.47,339.01 1931.05,335.14 1931.63,331.34 1932.22,327.62 1932.80,323.97 1933.38,320.39 1933.96,316.90 1934.55,313.48 1935.13,310.15 1935.71,306.90 1936.29,303.73 1936.88,300.65 1937.46,297.65 1938.04,294.75 1938.62,291.93 1939.20,289.21 1939.79,286.57 1940.37,284.03 1940.95,281.59 1941.53,279.24 1942.12,276.98 1942.70,274.82 1943.28,272.77 1943.86,270.81 1944.45,268.95 1945.03,267.19 1945.61,265.53 1946.19,263.98 1946.77,262.52 1947.36,261.18 1947.94,259.93 1948.52,258.79 1949.10,257.76 1949.69,256.83 1950.27,256.01 1950.85,255.29 1951.43,254.68 1952.02,254.18 1952.60,253.79 1953.18,253.50 1953.76,253.32 1954.34,253.25 1954.93,253.29 1955.51,253.43 1956.09,253.68 1956.67,254.04 1957.26,254.51 1957.84,255.08 1958.42,255.76 1959.00,256.55 1959.59,257.44 1960.17,258.44 1960.75,259.55 1961.33,260.76 1961.92,262.07 1962.50,263.49 1963.08,265.01 1963.66,266.64 1964.24,268.36 1964.83,270.19 1965.41,272.11 1965.99,274.14 1966.57,276.27 1967.16,278.49 1967.74,280.81 1968.32,283.22 1968.90,285.73 1969.49,288.34 1970.07,291.03 1970.65,293.82 1971.23,296.70 1971.82,299.66 1972.40,302.71 1972.98,305.85 1973.56,309.08 1974.14,312.38 1974.73,315.77 1975.31,319.24 1975.89,322.79 1976.47,326.42 1977.06,330.12 1977.64,333.89 1978.22,337.74 1978.80,341.66 1979.39,345.65 1979.97,349.70 1980.55,353.82 1981.13,358.01 1981.71,362.25 1982.30,366.56 1982.88,370.92 1983.46,375.34 1984.04,379.82 1984.63,384.34 1985.21,388.92 1985.79,393.55 1986.37,398.22 1986.96,402.94 1987.54,407.69 1988.12,412.49 1988.70,417.33 1989.28,422.20 1989.87,427.11 1990.45,432.05 1991.03,437.02 1991.61,442.01 1992.20,447.03 1992.78,452.08 1993.36,457.14 1993.94,462.22 1994.53,467.32 1995.11,472.44 1995.69,477.56 1996.27,482.70 1996.86,487.84 1997.44,492.98 1998.02,498.13 1998.60,503.29 1999.18,508.43 1999.77,513.58 2000.35,518.72 2000.93,523.85 2001.51,528.97 2002.10,534.08 2002.68,539.17 2003.26,544.24 2003.84,549.30 2004.43,554.33 2005.01,559.34 2005.59,564.32 2006.17,569.28 2006.76,574.20 2007.34,579.10 2007.92,583.95 2008.50,588.77 2009.08,593.55 2009.67,598.29 2010.25,602.99 2010.83,607.64 2011.41,612.25 2012.00,616.80 2012.58,621.31 2013.16,625.76 2013.74,630.15 2014.33,634.49 2014.91,638.77 2015.49,642.99 2016.07,647.14 2016.65,651.23 2017.24,655.26 2017.82,659.22 2018.40,663.10 2018.98,666.92 2019.57,670.66 2020.15,674.33 2020.73,677.92 2021.31,681.43 2021.90,684.86 2022.48,688.22 2023.06,691.49 2023.64,694.67 2024.22,697.77 2024.81,700.78 2025.39,703.71 2025.97,706.55 2026.55,709.29 2027.14,711.95 2027.72,714.51 2028.30,716.98 2028.88,719.35 2029.47,721.62 2030.05,723.80 2030.63,725.88 2031.21,727.87 2031.80,729.75 2032.38,731.53 2032.96,733.21 2033.54,734.79 2034.12,736.26 2034.71,737.63 2035.29,738.90 2035.87,740.06 2036.45,741.12 2037.04,742.07 2037.62,742.92 2038.20,743.66 2038.78,744.29 2039.37,744.81 2039.95,745.23 2040.53,745.54 2041.11,745.75 2041.70,745.84 2042.28,745.83 2042.86,745.71 2043.44,745.48 2044.02,745.15 2044.61,744.70 2045.19,744.15 2045.77,743.50 2046.35,742.73 2046.94,741.86 2047.52,740.89 2048.10,739.81 2048.68,738.62 2049.27,737.33 2049.85,735.94 2050.43,734.44 2051.01,732.84 2051.59,731.13 2052.18,729.33 2052.76,727.42 2053.34,725.42 2053.92,723.32 2054.51,721.12 2055.09,718.82 2055.67,716.42 2056.25,713.93 2056.84,711.35 2057.42,708.68 2058.00,705.91 2058.58,703.05 2059.16,700.11 2059.75,697.07 2060.33,693.95 2060.91,690.75 2061.49,687.46 2062.08,684.09 2062.66,680.64 2063.24,677.11 2063.82,673.50 2064.41,669.82 2064.99,666.06 2065.57,662.22 2066.15,658.32 2066.74,654.35 2067.32,650.31 2067.90,646.20" fill="none" stroke="#1a73c0" stroke-width="1.3" stroke-linejoin="round"/>
<path d="M320.90 807.70v-7M320.90 191.50v7 M398.00 807.70v-3.5M398.00 191.50v3.5 M475.11 807.70v-7M475.11 191.50v7 M552.21 807.70v-3.5M552.21 191.50v3.5 M629.32 807.70v-7M629.32 191.50v7 M706.42 807.70v-3.5M706.42 191.50v3.5 M783.53 807.70v-7M783.53 191.50v7 M860.63 807.70v-3.5M860.63 191.50v3.5 M937.74 807.70v-7M937.74 191.50v7 M1014.85 807.70v-3.5M1014.85 191.50v3.5 M1091.95 807.70v-7M1091.95 191.50v7 M1169.05 807.70v-3.5M1169.05 191.50v3.5 M1246.16 807.70v-7M1246.16 191.50v7 M1323.27 807.70v-3.5M1323.27 191.50v3.5 M1400.37 807.70v-7M1400.37 191.50v7 M1477.47 807.70v-3.5M1477.47 191.50v3.5 M1554.58 807.70v-7M1554.58 191.50v7 M1631.68 807.70v-3.5M1631.68 191.50v3.5 M1708.79 807.70v-7M1708.79 191.50v7 M1785.89 807.70v-3.5M1785.89 191.50v3.5 M1863.00 807.70v-7M1863.00 191.50v7 M1940.11 807.70v-3.5M1940.11 191.50v3.5 M2017.21 807.70v-7M2017.21 191.50v7 M320.90 795.11h7M2067.90 795.11h-7 M320.90 770.48h3.5M2067.90 770.48h-3.5 M320.90 745.85h7M2067.90 745.85h-7 M320.90 721.22h3.5M2067.90 721.22h-3.5 M320.90 696.59h7M2067.90 696.59h-7 M320.90 671.96h3.5M2067.90 671.96h-3.5 M320.90 647.33h7M2067.90 647.33h-7 M320.90 622.70h3.5M2067.90 622.70h-3.5 M320.90 598.07h7M2067.90 598.07h-7 M320.90 573.44h3.5M2067.90 573.44h-3.5 M320.90 548.81h7M2067.90 548.81h-7 M320.90 524.18h3.5M2067.90 524.18h-3.5 M320.90 499.55h7M2067.90 499.55h-7 M320.90 474.92h3.5M2067.90 474.92h-3.5 M320.90 450.29h7M2067.90 450.29h-7 M320.90 425.66h3.5M2067.90 425.66h-3.5 M320.90 401.03h7M2067.90 401.03h-7 M320.90 376.40h3.5M2067.90 376.40h-3.5 M320.90 351.77h7M2067.90 351.77h-7 M320.90 327.14h3.5M2067.90 327.14h-3.5 M320.90 302.51h7M2067.90 302.51h-7 M320.90 277.88h3.5M2067.90 277.88h-3.5 M320.90 253.25h7M2067.90 253.25h-7 M320.90 228.62h3.5M2067.90 228.62h-3.5 M320.90 203.99h7M2067.90 203.99h-7" stroke="#262626" stroke-width="1.3" fill="none"/>
<rect x="320.90" y="191.50" width="1747.00" height="616.20" fill="none" stroke="#262626" stroke-width="1.4"/>
<g font-family="Liberation Sans, sans-serif" font-size="14" fill="#262626"><text x="317.5" y="799.31" text-anchor="end">-12</text><text x="317.5" y="750.05" text-anchor="end">-10</text><text x="317.5" y="700.79" text-anchor="end">-8</text><text x="317.5" y="651.53" text-anchor="end">-6</text><text x="317.5" y="602.27" text-anchor="end">-4</text><text x="317.5" y="553.01" text-anchor="end">-2</text><text x="317.5" y="503.75" text-anchor="end">0</text><text x="317.5" y="454.49" text-anchor="end">2</text><text x="317.5" y="405.23" text-anchor="end">4</text><text x="317.5" y="355.97" text-anchor="end">6</text><text x="317.5" y="306.71" text-anchor="end">8</text><text x="317.5" y="257.45" text-anchor="end">10</text><text x="317.5" y="208.19" text-anchor="end">12</text><text x="320.90" y="822" text-anchor="middle">0</text><text x="475.11" y="822" text-anchor="middle">0.002</text><text x="629.32" y="822" text-anchor="middle">0.004</text><text x="783.53" y="822" text-anchor="middle">0.006</text><text x="937.74" y="822" text-anchor="middle">0.008</text><text x="1091.95" y="822" text-anchor="middle">0.01</text><text x="1246.16" y="822" text-anchor="middle">0.012</text><text x="1400.37" y="822" text-anchor="middle">0.014</text><text x="1554.58" y="822" text-anchor="middle">0.016</text><text x="1708.79" y="822" text-anchor="middle">0.018</text><text x="1863.00" y="822" text-anchor="middle">0.02</text><text x="2017.21" y="822" text-anchor="middle">0.022</text><text x="1194" y="843" text-anchor="middle" font-size="14.5">Time (s)</text><text transform="translate(288,499.5) rotate(-90)" text-anchor="middle" font-size="14.5">Amplitude</text></g>
<rect x="1858.5" y="215.5" width="139" height="23" fill="#fff" stroke="#262626" stroke-width="1"/>
<path d="M1863 227.5H1895" stroke="#0f72bf" stroke-width="1.45"/>
<text x="1897.5" y="231.3" font-family="Liberation Sans, sans-serif" font-size="13.5" fill="#262626">Dev3_ai0 (Volts)</text>
<g fill="none" stroke="#c9c9c9" stroke-width="1">
<path d="M1967 214 L1965.5 209 Q1965 207 1966.5 207.5 L1968 210 V204.5 Q1968.5 203 1969.5 204.5 V209 V203.5 Q1970.5 202 1971.5 203.5 V209 V204 Q1972.5 202.8 1973.5 204 V209.5 V205.5 Q1974.5 204.5 1975.5 205.5 V211 Q1975.5 214 1974 215"/>
<circle cx="2006" cy="207.5" r="5"/><path d="M2003.5 207.5h5M2006 205v5M2009.8 211.3L2015 216.5"/>
<rect x="2036.5" y="201.5" width="15" height="16"/>
<path d="M2038.5 203.5l3 3M2038.5 203.5h2.5M2038.5 203.5v2.5M2049.5 203.5l-3 3M2049.5 203.5h-2.5M2049.5 203.5v2.5M2038.5 215.5l3 -3M2038.5 215.5h2.5M2038.5 215.5v-2.5M2049.5 215.5l-3 -3M2049.5 215.5h-2.5M2049.5 215.5v-2.5"/>
</g>
</svg>
<svg class="a" style="left:2542px;top:146px" width="16" height="16" viewBox="0 0 16 16"><rect x="0.7" y="0.7" width="14.6" height="14.6" rx="2" fill="none" stroke="#8a8a8a" stroke-width="1.3"/>
<path d="M3 3l3.5 3.5M3 3h3M3 3v3M13 3l-3.5 3.5M13 3h-3M13 3v3M3 13l3.5-3.5M3 13h3M3 13v-3M13 13l-3.5-3.5M13 13h-3M13 13v-3" stroke="#7a7a7a" stroke-width="1.1" fill="none"/><rect x="7" y="7" width="2" height="2" fill="#aaa"/></svg>
<div class="a" style="left:2098px;top:181px;width:447px;height:675px;border:1px solid #c4c4c4;background:#f4f4f4"></div>
<div class="a" style="left:2101px;top:185px;width:440px;height:118px;background:#d9d9d9"></div>
<div class="a" style="left:2101px;top:235px;width:440px;text-align:center;font-size:15px;line-height:17px;font-weight:bold;color:#1e1e1e">Plot Tools</div>
<div class="a" style="left:2120px;top:356px;width:14px;height:13px;background:#fff;border:1px solid #555"></div>
<svg class="a" style="left:2120px;top:355px" width="14" height="14" viewBox="0 0 14 14"><path d="M2.5 7.5 L5.5 10.5 L11.5 2.5" fill="none" stroke="#111" stroke-width="1.9"/></svg>
<div class="a" style="left:2137px;top:355px;font-size:14px;line-height:16px;color:#1e1e1e">Show Legend</div>
<div class="a" style="left:2101px;top:381px;width:440px;height:471px;border:1px solid #bdbdbd;border-left:1px solid #707070;border-top:1px solid #c8c8c8"></div>
<div class="a" style="left:2102px;top:403px;width:438px;height:1px;background:#bdbdbd"></div>
<div class="a" style="left:2105px;top:385px;font-size:14px;line-height:16px;color:#1e1e1e">Y-Axis Scaling</div>
<svg class="a" style="left:2120px;top:654px" width="16" height="46" viewBox="0 0 16 46"><circle cx="7.8" cy="7.8" r="6.3" fill="#fff" stroke="#555" stroke-width="1.1"/><circle cx="7.8" cy="7.8" r="3" fill="#111"/><circle cx="7.8" cy="37.8" r="6.3" fill="#fff" stroke="#555" stroke-width="1.1"/></svg>
<div class="a" style="left:2137px;top:654px;font-size:14px;line-height:16px;color:#1e1e1e">Autoscale</div>
<div class="a" style="left:2137px;top:684px;font-size:14px;line-height:16px;color:#1e1e1e">Set Y-Limits</div>
<div class="a" style="left:2131px;top:714px;font-size:14px;line-height:16px;color:#1e1e1e">Min</div>
<div class="a" style="left:2131px;top:744px;font-size:14px;line-height:16px;color:#1e1e1e">Max</div>
<div class="a" style="left:2221px;top:711px;width:70px;height:20px;background:#f7f7f7;border:1px solid #d0d0d0"></div>
<div class="a" style="left:2221px;top:741px;width:70px;height:20px;background:#f7f7f7;border:1px solid #d0d0d0"></div>
<div class="a" style="left:2226px;top:714px;font-size:12px;line-height:14px;color:#b0b0b0">-10</div>
<div class="a" style="left:2226px;top:744px;font-size:12px;line-height:14px;color:#b0b0b0">10</div>
<div class="a" style="left:247px;top:891px;width:2311px;height:2px;background:#b4b4b4"></div>
<div class="a" style="left:247px;top:893px;width:2311px;height:22px;background:#013f72"></div>
<div class="a" style="left:273px;top:896px;font-size:14px;line-height:16px;color:#fff;transform:scaleX(0.925);transform-origin:0 0">Channels</div>
<svg class="a" style="left:2542px;top:899px" width="3" height="11" viewBox="0 0 3 11"><rect x="0" y="0" width="2.2" height="2.2" fill="#fff"/><rect x="0" y="4" width="2.2" height="2.2" fill="#fff"/><rect x="0" y="8" width="2.2" height="2.2" fill="#fff"/></svg>
<div class="a" style="left:257px;top:925px;width:2293px;height:434px;border:1px solid #e4e4e4;border-top:none"></div>
<div class="a" style="left:257px;top:925px;width:2293px;height:24px;background:#e4e4e4;border:1px solid #cfcfcf;border-bottom:1px solid #c4c4c4"></div>
<div class="a" style="left:257px;top:925px;width:161px;height:25px;background:#f4f4f4;border:1px solid #cfcfcf;border-bottom:none"></div>
<div class="a" style="left:417px;top:925px;width:141px;height:24px;border-right:1px solid #cfcfcf"></div>
<div class="a" style="left:266px;top:930px;font-size:12px;line-height:14px;color:#222">AVAILABLE CHANNELS</div>
<div class="a" style="left:426px;top:930px;font-size:12px;line-height:14px;color:#222">ACTIVE CHANNELS</div>
<div class="a" style="left:268px;top:960px;width:1130px;height:389px;background:#fff;overflow:hidden"></div>
<svg class="a" style="left:0;top:0" width="2558" height="1387" viewBox="0 0 2558 1387">
<defs><clipPath id="tc"><rect x="268" y="960" width="1130" height="388"/></clipPath></defs>
<g clip-path="url(#tc)">
<rect x="267.6" y="959.4" width="1130.6999999999998" height="27.300000000000068" fill="#f4f4f4"/>
<rect x="267.6" y="986.70" width="1114.80" height="23.25" fill="#ffffff"/>
<rect x="267.6" y="1009.95" width="1114.80" height="23.25" fill="#f4f4f4"/>
<rect x="267.6" y="1033.20" width="1114.80" height="23.25" fill="#ffffff"/>
<rect x="267.6" y="1056.45" width="1114.80" height="23.25" fill="#f4f4f4"/>
<rect x="267.6" y="1079.70" width="1114.80" height="23.25" fill="#ffffff"/>
<rect x="267.6" y="1102.95" width="1114.80" height="23.25" fill="#f4f4f4"/>
<rect x="267.6" y="1126.20" width="1114.80" height="23.25" fill="#ffffff"/>
<rect x="267.6" y="1149.45" width="1114.80" height="23.25" fill="#f4f4f4"/>
<rect x="267.6" y="1172.70" width="1114.80" height="23.25" fill="#ffffff"/>
<rect x="267.6" y="1195.95" width="1114.80" height="23.25" fill="#f4f4f4"/>
<rect x="267.6" y="1219.20" width="1114.80" height="23.25" fill="#ffffff"/>
<rect x="267.6" y="1242.45" width="1114.80" height="23.25" fill="#f4f4f4"/>
<rect x="267.6" y="1265.70" width="1114.80" height="23.25" fill="#ffffff"/>
<rect x="267.6" y="1288.95" width="1114.80" height="23.25" fill="#f4f4f4"/>
<rect x="267.6" y="1312.20" width="1114.80" height="23.25" fill="#ffffff"/>
<rect x="267.6" y="1335.45" width="1114.80" height="23.25" fill="#f4f4f4"/>
<path d="M267.6 1009.95H1381" stroke="#a8a8a8" stroke-width="1.2"/>
<path d="M267.6 1033.20H1381" stroke="#a8a8a8" stroke-width="1.2"/>
<path d="M267.6 1056.45H1381" stroke="#a8a8a8" stroke-width="1.2"/>
<path d="M267.6 1079.70H1381" stroke="#a8a8a8" stroke-width="1.2"/>
<path d="M267.6 1102.95H1381" stroke="#a8a8a8" stroke-width="1.2"/>
<path d="M267.6 1126.20H1381" stroke="#a8a8a8" stroke-width="1.2"/>
<path d="M267.6 1149.45H1381" stroke="#a8a8a8" stroke-width="1.2"/>
<path d="M267.6 1172.70H1381" stroke="#a8a8a8" stroke-width="1.2"/>
<path d="M267.6 1195.95H1381" stroke="#a8a8a8" stroke-width="1.2"/>
<path d="M267.6 1219.20H1381" stroke="#a8a8a8" stroke-width="1.2"/>
<path d="M267.6 1242.45H1381" stroke="#a8a8a8" stroke-width="1.2"/>
<path d="M267.6 1265.70H1381" stroke="#a8a8a8" stroke-width="1.2"/>
<path d="M267.6 1288.95H1381" stroke="#a8a8a8" stroke-width="1.2"/>
<path d="M267.6 1312.20H1381" stroke="#a8a8a8" stroke-width="1.2"/>
<path d="M267.6 1335.45H1381" stroke="#a8a8a8" stroke-width="1.2"/>
<path d="M267.6 1358.70H1381" stroke="#a8a8a8" stroke-width="1.2"/>
<path d="M307.4 959.4V1348.3" stroke="#a8a8a8" stroke-width="1"/>
<path d="M575.9 959.4V1348.3" stroke="#a8a8a8" stroke-width="1"/>
<path d="M845.0 959.4V1348.3" stroke="#a8a8a8" stroke-width="1"/>
<path d="M1113.5 959.4V1348.3" stroke="#a8a8a8" stroke-width="1"/>
<path d="M1382.4 959.4V1348.3" stroke="#a8a8a8" stroke-width="1"/>
<path d="M267.6 986.7H1398.3" stroke="#8a8a8a" stroke-width="1.8"/>
<g font-family="Liberation Sans, sans-serif" font-size="12" fill="#333"><text x="311.5" y="1002.90">Dev3</text><text x="579" y="1002.90">ai0</text><text x="848" y="1002.90">Dev3_ai0</text><text x="1117" y="1002.90">Voltage</text><path d="M1365 995.90h8l-4 4.5z" fill="#555"/><rect x="281.5" y="991.20" width="12.5" height="12.5" fill="#fff" stroke="#6a6a6a" stroke-width="1"/><text x="311.5" y="1026.15">Dev3</text><text x="579" y="1026.15">ai1</text><text x="848" y="1026.15">Dev3_ai1</text><text x="1117" y="1026.15">Voltage</text><path d="M1365 1019.15h8l-4 4.5z" fill="#555"/><rect x="281.5" y="1014.45" width="12.5" height="12.5" fill="#fff" stroke="#6a6a6a" stroke-width="1"/><text x="311.5" y="1049.40">Dev3</text><text x="579" y="1049.40">ai2</text><text x="848" y="1049.40">Dev3_ai2</text><text x="1117" y="1049.40">Voltage</text><path d="M1365 1042.40h8l-4 4.5z" fill="#555"/><rect x="281.5" y="1037.70" width="12.5" height="12.5" fill="#fff" stroke="#6a6a6a" stroke-width="1"/><text x="311.5" y="1072.65">Dev3</text><text x="579" y="1072.65">ai3</text><text x="848" y="1072.65">Dev3_ai3</text><text x="1117" y="1072.65">Voltage</text><path d="M1365 1065.65h8l-4 4.5z" fill="#555"/><rect x="281.5" y="1060.95" width="12.5" height="12.5" fill="#fff" stroke="#6a6a6a" stroke-width="1"/><text x="311.5" y="1095.90">Dev3</text><text x="579" y="1095.90">ai4</text><text x="848" y="1095.90">Dev3_ai4</text><text x="1117" y="1095.90">Voltage</text><path d="M1365 1088.90h8l-4 4.5z" fill="#555"/><rect x="281.5" y="1084.20" width="12.5" height="12.5" fill="#fff" stroke="#6a6a6a" stroke-width="1"/><text x="311.5" y="1119.15">Dev3</text><text x="579" y="1119.15">ai5</text><text x="848" y="1119.15">Dev3_ai5</text><text x="1117" y="1119.15">Voltage</text><path d="M1365 1112.15h8l-4 4.5z" fill="#555"/><rect x="281.5" y="1107.45" width="12.5" height="12.5" fill="#fff" stroke="#6a6a6a" stroke-width="1"/><text x="311.5" y="1142.40">Dev3</text><text x="579" y="1142.40">ai6</text><text x="848" y="1142.40">Dev3_ai6</text><text x="1117" y="1142.40">Voltage</text><path d="M1365 1135.40h8l-4 4.5z" fill="#555"/><rect x="281.5" y="1130.70" width="12.5" height="12.5" fill="#fff" stroke="#6a6a6a" stroke-width="1"/><text x="311.5" y="1165.65">Dev3</text><text x="579" y="1165.65">ai7</text><text x="848" y="1165.65">Dev3_ai7</text><text x="1117" y="1165.65">Voltage</text><path d="M1365 1158.65h8l-4 4.5z" fill="#555"/><rect x="281.5" y="1153.95" width="12.5" height="12.5" fill="#fff" stroke="#6a6a6a" stroke-width="1"/><text x="311.5" y="1188.90">Dev3</text><text x="579" y="1188.90">ai8</text><text x="848" y="1188.90">Dev3_ai8</text><text x="1117" y="1188.90">Voltage</text><path d="M1365 1181.90h8l-4 4.5z" fill="#555"/><rect x="281.5" y="1177.20" width="12.5" height="12.5" fill="#fff" stroke="#6a6a6a" stroke-width="1"/><text x="311.5" y="1212.15">Dev3</text><text x="579" y="1212.15">ai9</text><text x="848" y="1212.15">Dev3_ai9</text><text x="1117" y="1212.15">Voltage</text><path d="M1365 1205.15h8l-4 4.5z" fill="#555"/><rect x="281.5" y="1200.45" width="12.5" height="12.5" fill="#fff" stroke="#6a6a6a" stroke-width="1"/><text x="311.5" y="1235.40">Dev3</text><text x="579" y="1235.40">ai10</text><text x="848" y="1235.40">Dev3_ai10</text><text x="1117" y="1235.40">Voltage</text><path d="M1365 1228.40h8l-4 4.5z" fill="#555"/><rect x="281.5" y="1223.70" width="12.5" height="12.5" fill="#fff" stroke="#6a6a6a" stroke-width="1"/><text x="311.5" y="1258.65">Dev3</text><text x="579" y="1258.65">ai11</text><text x="848" y="1258.65">Dev3_ai11</text><text x="1117" y="1258.65">Voltage</text><path d="M1365 1251.65h8l-4 4.5z" fill="#555"/><rect x="281.5" y="1246.95" width="12.5" height="12.5" fill="#fff" stroke="#6a6a6a" stroke-width="1"/><text x="311.5" y="1281.90">Dev3</text><text x="579" y="1281.90">ai12</text><text x="848" y="1281.90">Dev3_ai12</text><text x="1117" y="1281.90">Voltage</text><path d="M1365 1274.90h8l-4 4.5z" fill="#555"/><rect x="281.5" y="1270.20" width="12.5" height="12.5" fill="#fff" stroke="#6a6a6a" stroke-width="1"/><text x="311.5" y="1305.15">Dev3</text><text x="579" y="1305.15">ai13</text><text x="848" y="1305.15">Dev3_ai13</text><text x="1117" y="1305.15">Voltage</text><path d="M1365 1298.15h8l-4 4.5z" fill="#555"/><rect x="281.5" y="1293.45" width="12.5" height="12.5" fill="#fff" stroke="#6a6a6a" stroke-width="1"/><text x="311.5" y="1328.40">Dev3</text><text x="579" y="1328.40">ai14</text><text x="848" y="1328.40">Dev3_ai14</text><text x="1117" y="1328.40">Voltage</text><path d="M1365 1321.40h8l-4 4.5z" fill="#555"/><rect x="281.5" y="1316.70" width="12.5" height="12.5" fill="#fff" stroke="#6a6a6a" stroke-width="1"/><text x="311.5" y="1351.65">Dev3</text><text x="579" y="1351.65">ai15</text><text x="848" y="1351.65">Dev3_ai15</text><text x="1117" y="1351.65">Voltage</text><path d="M1365 1344.65h8l-4 4.5z" fill="#555"/><rect x="281.5" y="1339.95" width="12.5" height="12.5" fill="#fff" stroke="#6a6a6a" stroke-width="1"/></g>
<path d="M283.6 997.3 L287.2 1000.8 L293 993.8" fill="none" stroke="#1a1a1a" stroke-width="2.3"/>
<g font-family="Liberation Sans, sans-serif" font-size="12" font-weight="bold" fill="#1a1a1a"><text x="271.5" y="977.3">Add</text><text x="311.5" y="977.3">Device ID</text><text x="579.5" y="977.3">Channel ID</text><text x="848" y="977.3">Name</text><text x="1117.5" y="977.3">Measurement Type</text></g>
<rect x="1382.4" y="987.5" width="15" height="361" fill="#f0f0f0"/>
<rect x="1383" y="1003.2" width="14" height="319.2" fill="#c0c0c0"/>
<path d="M1386 997h8l-4 -4.5z" fill="#c8c8c8"/>
<path d="M1386 1337.5h8l-4 4.5z" fill="#444"/>
</g>
<rect x="267.6" y="959.4" width="1130.70" height="388.90" fill="none" stroke="#a3a3a3" stroke-width="1.2"/>
</svg>
<div class="a" style="left:1409px;top:959px;width:1132px;height:390px;border:1px solid #a0a0a0;border-top-color:#c4c4c4;border-left-color:#c4c4c4;border-right-color:#c8c8c8"></div>
<div class="a" style="left:1409px;top:971px;width:1100px;text-align:center;font-size:12px;line-height:14px;font-weight:bold;color:#1e1e1e">Channel ai0</div>
<div class="a" style="left:1460px;top:1005px;width:200px;text-align:right;font-size:12px;line-height:14px;color:#262626">Name</div>
<div class="a" style="left:1460px;top:1037px;width:200px;text-align:right;font-size:12px;line-height:14px;color:#262626">Range</div>
<div class="a" style="left:1460px;top:1070px;width:200px;text-align:right;font-size:12px;line-height:14px;color:#262626">Coupling</div>
<div class="a" style="left:1912px;top:1005px;width:200px;text-align:right;font-size:12px;line-height:14px;color:#262626">Measurement Type</div>
<div class="a" style="left:1912px;top:1037px;width:200px;text-align:right;font-size:12px;line-height:14px;color:#262626">Terminal Config</div>
<div class="a" style="left:1670px;top:996px;width:137px;height:23px;background:#fff;border:1px solid #9a9a9a"></div>
<div class="a" style="left:1675px;top:1000px;font-size:12px;line-height:14px;color:#1e1e1e">Dev3_ai0</div>
<div class="a" style="left:1670px;top:1029px;width:137px;height:22px;background:#f9f9f9;border:1px solid #a5a5a5;border-radius:3px"></div><div class="a" style="left:1675px;top:1033px;font-size:12px;line-height:14px;color:#1e1e1e">-10 to +10 Volts</div><svg class="a" style="left:1791px;top:1036px" width="9" height="8" viewBox="0 0 9 8"><path d="M0 0h9l-4.5 7.5z" fill="#333"/></svg>
<div class="a" style="left:1670px;top:1062px;width:137px;height:22px;background:#f9f9f9;border:1px solid #a5a5a5;border-radius:3px"></div><div class="a" style="left:1675px;top:1066px;font-size:12px;line-height:14px;color:#1e1e1e">DC</div><svg class="a" style="left:1791px;top:1069px" width="9" height="8" viewBox="0 0 9 8"><path d="M0 0h9l-4.5 7.5z" fill="#333"/></svg>
<div class="a" style="left:2122px;top:996px;width:186px;height:22px;background:#f9f9f9;border:1px solid #a5a5a5;border-radius:3px"></div><div class="a" style="left:2127px;top:1000px;font-size:12px;line-height:14px;color:#1e1e1e">Voltage</div><svg class="a" style="left:2292px;top:1003px" width="9" height="8" viewBox="0 0 9 8"><path d="M0 0h9l-4.5 7.5z" fill="#333"/></svg>
<div class="a" style="left:2122px;top:1029px;width:186px;height:22px;background:#f9f9f9;border:1px solid #a5a5a5;border-radius:3px"></div><div class="a" style="left:2127px;top:1033px;font-size:12px;line-height:14px;color:#1e1e1e">SingleEnded</div><svg class="a" style="left:2292px;top:1036px" width="9" height="8" viewBox="0 0 9 8"><path d="M0 0h9l-4.5 7.5z" fill="#333"/></svg>
</body></html>
